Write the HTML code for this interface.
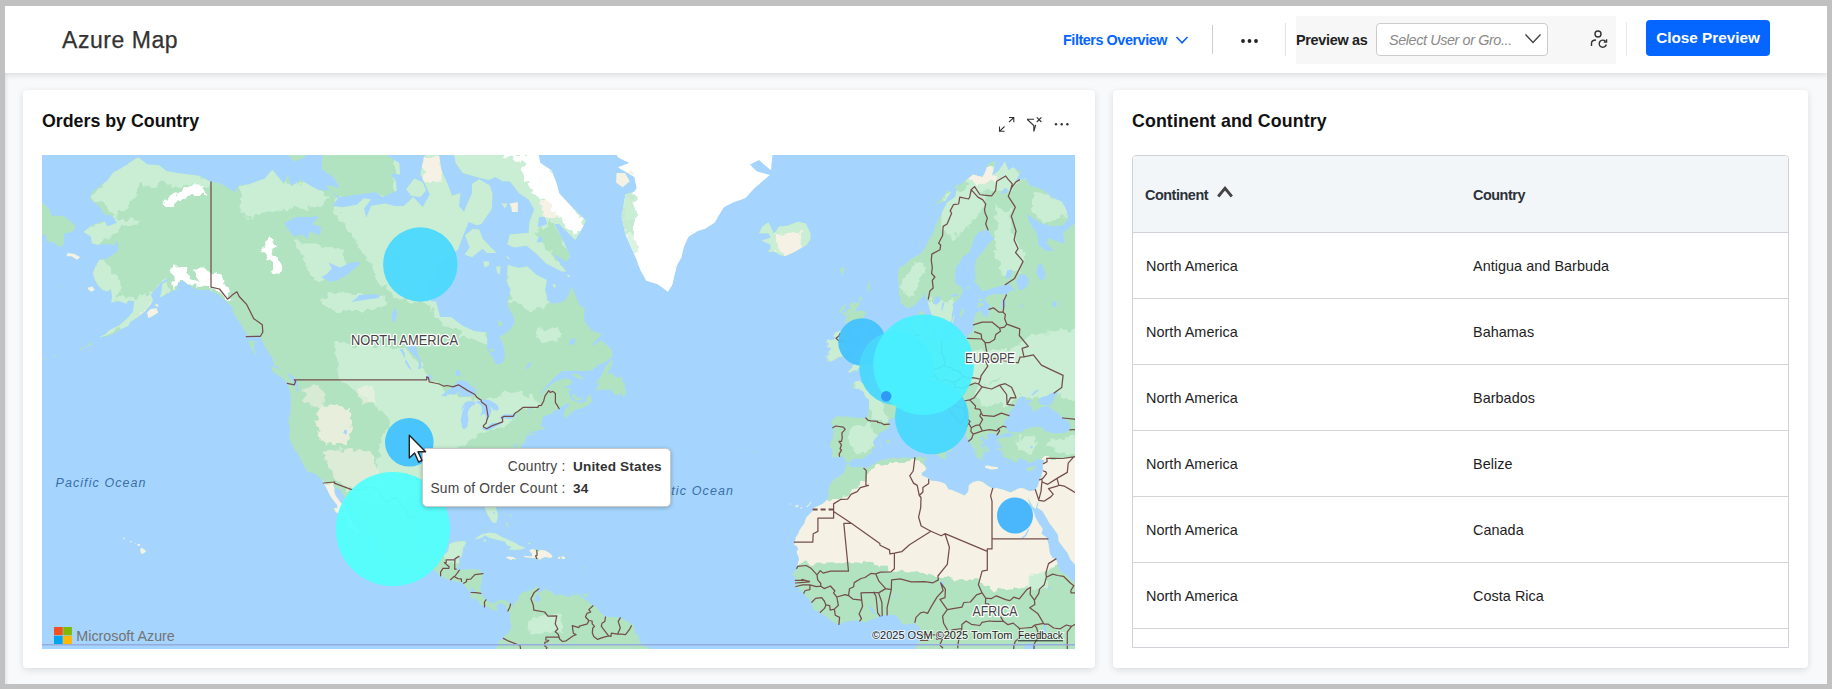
<!DOCTYPE html>
<html lang="en">
<head>
<meta charset="utf-8">
<title>Azure Map</title>
<style>
*{box-sizing:border-box;margin:0;padding:0}
html,body{width:1832px;height:689px;overflow:hidden;background:#c1c1c1;font-family:"Liberation Sans",sans-serif;color:#222}
#frame{position:absolute;left:5px;top:6px;width:1822px;height:678px;background:#f8f9fa;overflow:hidden}
#frame:before{content:"";position:absolute;left:0;top:67px;width:4px;height:611px;background:linear-gradient(90deg,rgba(60,70,90,.10),rgba(60,70,90,0))}
#hdr{position:absolute;left:0;top:0;width:1822px;height:67px;background:#fff;box-shadow:0 2px 6px rgba(0,0,0,.12)}
.abs{position:absolute;white-space:nowrap}
#title{left:57px;top:19px;font-size:23px;line-height:30px;color:#333;letter-spacing:.55px;-webkit-text-stroke:.25px #333}
#fo{left:1058px;top:25px;font-size:14.4px;line-height:18px;font-weight:bold;color:#0565ff;letter-spacing:-.45px}
.vsep{position:absolute;width:1px}
#pvbg{position:absolute;left:1291px;top:10px;width:320px;height:48px;background:#f7f7f7}
#pvas{left:1291px;top:25px;font-size:14.4px;line-height:18px;font-weight:bold;color:#222;letter-spacing:-.3px}
#sel{position:absolute;left:1371px;top:17px;width:172px;height:33px;border:1px solid #ccc;border-radius:4px;background:#fff}
#selt{left:1384px;top:25px;font-size:14.4px;line-height:18px;font-style:italic;color:#8a8a8a;letter-spacing:-.4px}
#btn{position:absolute;left:1641px;top:14px;width:124px;height:36px;border-radius:4px;background:#0565ff;color:#fff;font-weight:bold;font-size:15.3px;line-height:35px;text-align:center;white-space:nowrap}
.card{position:absolute;background:#fff;border-radius:4px;box-shadow:0 2px 7px rgba(0,0,0,.12)}
#c1{left:18px;top:84px;width:1072px;height:578px}
#c2{left:1108px;top:84px;width:695px;height:578px}
.ct{font-size:17.8px;line-height:24px;font-weight:bold;color:#111}
#map{position:absolute;left:37px;top:149px;width:1033px;height:494px;overflow:hidden;background:#a5d5fe}
#tbl{position:absolute;left:1127px;top:149px;width:657px;height:493px;border:1px solid #cfd3d7;border-radius:4px 4px 0 0;overflow:hidden;background:#fff}
#th{position:absolute;left:0;top:0;width:655px;height:77px;background:#f3f6f9;border-bottom:1px solid #cfd3d7}
.hc{position:absolute;top:29.5px;font-size:14.4px;line-height:18px;font-weight:bold;color:#2b3138;letter-spacing:-.45px}
.row{position:absolute;left:0;width:655px;height:66px;border-bottom:1px solid #d2d5d8}
.row span{position:absolute;top:23.5px;font-size:14.4px;line-height:18px;color:#1d1d1d;white-space:nowrap;letter-spacing:.05px}
.row .a{left:13px}.row .b{left:340px}
</style>
</head>
<body>
<div id="frame">
 <div id="hdr">
  <div class="abs" id="title">Azure Map</div>
  <div class="abs" id="fo">Filters Overview</div>
  <svg class="abs" style="left:1170px;top:29px" width="14" height="10" viewBox="0 0 14 10"><path d="M1.5 2 L7 7.8 L12.5 2" fill="none" stroke="#0565ff" stroke-width="1.6"/></svg>
  <div class="vsep" style="left:1207px;top:19px;height:29px;background:#cfcfcf"></div>
  <svg class="abs" style="left:1235px;top:32px" width="20" height="6" viewBox="0 0 20 6"><circle cx="3" cy="3" r="1.9" fill="#222"/><circle cx="9.5" cy="3" r="1.9" fill="#222"/><circle cx="16" cy="3" r="1.9" fill="#222"/></svg>
  <div class="vsep" style="left:1280px;top:17px;height:33px;background:#e4e4e4"></div>
  <div id="pvbg"></div>
  <div class="abs" id="pvas">Preview as</div>
  <div id="sel"></div>
  <div class="abs" id="selt">Select User or Gro...</div>
  <svg class="abs" style="left:1519px;top:27px" width="18" height="12" viewBox="0 0 18 12"><path d="M1.5 1.5 L9 9.5 L16.5 1.5" fill="none" stroke="#444" stroke-width="1.4"/></svg>
  <svg class="abs" id="uicon" style="left:1584px;top:23px" width="20" height="20" viewBox="0 0 20 20"><circle cx="9" cy="5" r="3" fill="none" stroke="#333" stroke-width="1.4"/><path d="M2.5 17 V14.5 Q2.5 11 7 11" fill="none" stroke="#333" stroke-width="1.4"/><path d="M16.5 12.3 A3.6 3.6 0 1 0 17.3 15.5" fill="none" stroke="#333" stroke-width="1.4"/><path d="M17.6 10.2 V13 H14.8" fill="none" stroke="#333" stroke-width="1.3"/></svg>
  <div class="vsep" style="left:1621px;top:16px;height:34px;background:#e8e8e8"></div>
  <div id="btn">Close Preview</div>
 </div>

 <div class="card" id="c1">
  <div class="abs ct" style="left:19px;top:18.5px">Orders by Country</div>
  <svg class="abs" style="left:973.5px;top:19.8px" width="80" height="24" viewBox="0 0 80 24">
   <g fill="none" stroke="#333" stroke-width="1.1">
    <path d="M7.5 16.5 L2.5 21.3 M2.5 16.5 V21.3 H7.5"/><path d="M12 12.2 L16.8 7.5 M12 7.5 H16.8 V12.2"/>
    <path d="M30 9.2 H37 M30.3 9.5 L36.8 15.5 V21.5 M38.6 15 L36.9 21.3"/>
    <path d="M39.8 7.3 L44.4 12 M44.4 7.3 L39.8 12"/>
   </g>
   <circle cx="59" cy="14.2" r="1.2" fill="#333"/><circle cx="64.7" cy="14.2" r="1.2" fill="#333"/><circle cx="70.4" cy="14.2" r="1.2" fill="#333"/>
  </svg>
 </div>
 <div id="map"><svg width="1033" height="494" viewBox="42 155 1033 494" style="position:absolute;left:0;top:0;display:block"><defs><clipPath id="lc"><path d="M92.4 191.9L89.6 199.0L100.4 207.2L104.2 214.5L112.2 215.7L116.9 222.8L107.5 226.4L104.2 221.1L92.9 224.6L83.5 232.1L91.0 236.6L92.0 243.3L98.1 244.9L107.5 243.8L115.0 245.5L116.0 240.5L117.8 243.3L117.8 250.9L112.2 255.1L106.1 259.3L100.0 259.3L95.7 265.5L92.9 273.5L95.3 280.4L98.1 285.2L102.8 289.9L107.5 291.4L110.8 289.0L112.2 296.5L111.2 302.4L118.8 301.0L126.3 303.8L128.2 300.6L134.3 301.0L132.9 311.8L128.2 317.4L119.2 325.5L108.9 330.5L105.6 334.2L99.0 337.1L107.5 336.3L114.5 333.0L121.6 328.9L128.7 325.5L130.1 322.1L138.1 317.0L145.1 310.9L148.9 306.4L153.1 300.6L150.8 294.6L156.4 288.1L160.7 282.8L167.2 278.4L169.6 277.5L167.7 280.9L162.5 283.8L161.1 293.2L159.7 297.4L166.3 294.6L171.5 290.9L177.1 289.9L178.1 282.3L183.2 280.4L188.9 285.2L194.5 288.1L196.9 289.9L208.6 289.9L217.1 293.7L225.6 301.0L231.7 306.4L236.4 309.1L235.9 317.0L240.6 323.8L244.9 331.3L250.5 335.9L257.1 333.0L261.3 338.7L264.6 345.9L269.3 353.7L272.6 358.3L274.0 365.1L280.2 368.8L286.7 372.5L294.7 377.6L297.6 382.6L299.0 391.1L296.2 391.8L297.1 386.2L287.7 384.0L290.5 394.5L291.0 399.0L290.7 410.0L288.4 421.4L290.0 428.7L289.1 436.9L292.4 445.7L296.2 451.4L298.0 453.8L300.9 459.7L303.7 465.0L307.0 471.6L311.2 472.4L316.9 474.7L318.3 476.4L322.5 480.3L323.4 483.1L325.8 486.8L329.6 494.7L333.3 500.2L337.1 505.0L337.6 507.7L333.3 508.5L335.7 511.9L339.9 514.6L346.0 518.2L347.0 525.5L351.2 528.1L355.9 532.7L357.3 534.3L359.7 532.2L355.4 527.1L353.6 524.0L350.5 518.2L346.0 511.4L343.7 505.5L340.4 502.3L335.7 495.8L334.3 491.4L334.5 487.3L340.4 489.8L344.6 496.9L347.7 503.4L352.6 508.2L358.7 514.6L360.1 520.3L366.7 526.6L373.8 532.7L378.0 538.8L379.0 541.9L378.0 544.9L377.1 546.9L380.4 551.4L383.7 553.7L387.9 557.4L393.5 559.1L399.2 562.3L404.4 564.5L411.0 567.2L417.5 569.4L422.7 570.2L426.5 568.0L432.1 568.7L436.8 572.1L440.1 575.8L446.2 578.9L453.3 580.9L459.4 582.3L462.2 582.3L464.1 585.2L468.4 590.0L471.2 592.7L470.7 597.2L474.0 599.6L475.4 597.7L476.4 599.6L478.5 600.6L480.6 604.9L482.5 605.1L484.4 607.0L487.6 606.0L490.0 608.7L493.8 610.8L498.0 609.8L496.1 606.3L499.9 602.7L504.6 604.4L506.0 606.3L506.5 609.6L507.9 611.0L510.2 614.3L509.8 619.1L510.7 623.8L511.6 626.6L508.8 632.8L503.6 636.5L502.7 639.4L498.9 640.5L497.5 645.0L496.1 649.2L496.1 654.4L665.0 654.4L658.0 650.2L648.6 648.3L641.5 644.1L639.1 640.8L639.1 636.5L634.9 633.2L634.0 625.2L631.6 624.7L628.3 621.7L620.8 618.1L614.7 617.0L605.3 616.7L600.8 612.9L596.8 607.2L592.1 604.9L588.3 601.5L583.6 598.7L578.9 595.8L582.7 594.4L578.0 594.4L572.3 595.3L568.6 597.2L563.6 594.8L559.6 594.8L554.5 595.3L552.6 592.0L547.4 590.5L546.0 589.6L545.0 587.2L543.6 590.0L539.4 592.9L536.1 590.5L538.9 588.8L537.3 586.0L531.4 590.3L525.3 591.5L522.2 592.7L519.2 595.8L518.2 600.1L513.3 604.1L512.6 607.2L510.5 604.1L505.1 600.3L500.4 599.6L498.5 600.8L493.3 603.4L490.0 602.5L487.6 601.0L483.9 597.7L481.1 593.4L480.4 588.1L481.5 583.3L482.0 578.5L483.2 573.6L479.2 569.7L474.5 569.0L469.8 569.0L466.0 569.7L460.6 569.4L457.5 570.2L456.1 569.0L458.9 565.8L459.4 561.3L458.9 556.4L461.3 557.4L462.7 551.4L462.9 547.9L466.0 542.9L464.6 540.9L458.0 541.4L452.6 542.4L449.1 544.4L448.6 549.7L446.2 553.4L442.5 555.7L438.2 555.9L430.2 558.1L426.5 555.4L422.2 552.9L419.9 548.9L416.6 543.9L414.3 537.6L414.5 528.6L417.3 518.5L416.6 511.9L418.0 507.7L422.7 504.5L428.4 500.7L432.8 498.5L440.1 499.3L444.8 500.7L449.5 501.8L453.8 502.3L452.8 497.5L455.2 495.3L460.4 495.3L464.1 495.0L471.2 496.4L472.8 498.8L478.2 496.6L482.0 499.6L485.1 505.0L485.1 508.7L487.6 514.6L489.5 517.7L492.8 522.7L496.1 522.7L497.3 519.3L497.8 514.6L495.4 505.3L493.3 500.7L491.4 495.0L493.3 485.9L498.5 481.7L502.7 477.5L507.6 475.6L514.2 471.3L519.2 467.6L517.3 459.7L515.4 457.4L515.4 451.4L514.5 444.2L516.8 443.0L516.3 449.6L517.1 456.5L520.6 451.4L521.1 446.6L519.2 443.0L521.8 445.7L524.3 443.3L526.2 436.5L526.7 434.4L531.4 431.6L536.3 431.3L538.5 430.0L541.8 429.4L545.3 428.7L544.1 426.5L542.2 427.5L540.3 424.6L542.2 422.7L541.5 420.1L544.1 416.3L549.8 414.0L553.5 412.0L559.2 408.0L563.6 405.7L570.0 402.4L569.0 405.4L564.8 410.0L563.4 415.3L565.8 417.9L571.9 412.0L575.2 410.0L582.7 407.4L587.4 405.4L592.3 401.3L590.2 393.8L587.4 396.6L585.0 402.7L579.4 402.7L574.2 400.7L570.9 399.0L568.6 393.1L570.5 388.3L566.2 388.3L562.5 386.9L567.2 386.2L572.3 383.3L571.9 380.5L566.2 378.0L556.8 380.8L552.1 383.7L547.2 387.9L542.2 393.1L539.4 395.2L542.7 391.1L546.5 385.8L553.8 378.3L562.0 371.1L575.2 370.7L583.6 371.1L592.1 370.3L598.2 365.1L605.7 362.1L612.3 356.8L611.9 349.8L606.2 344.3L600.6 340.3L592.1 345.1L596.8 339.5L602.0 334.6L591.2 330.1L584.1 320.8L584.6 308.2L579.9 305.6L571.4 286.2L568.6 294.6L563.9 301.5L553.0 303.8L546.9 300.1L546.9 296.5L545.0 289.9L546.9 279.9L536.1 274.5L527.2 266.5L518.7 268.0L507.9 265.0L506.5 282.3L510.7 289.5L506.9 304.2L513.5 317.0L514.5 323.0L508.6 331.3L499.4 336.7L502.7 343.5L505.1 355.6L503.2 361.4L499.4 364.4L495.6 363.6L491.9 356.0L487.2 350.2L487.2 332.6L474.5 331.3L462.2 325.5L450.9 317.0L440.1 317.0L435.9 301.5L431.2 301.5L428.8 289.9L431.7 279.4L441.1 262.4L447.7 256.7L458.0 249.8L462.7 236.6L468.8 221.7L476.8 225.2L481.5 224.0L491.9 208.4L492.4 193.2L489.5 185.3L479.2 179.2L472.1 183.9L472.1 193.2L467.4 203.4L464.1 212.1L458.9 205.9L460.4 193.2L451.9 195.8L448.6 186.6L441.5 170.2L439.2 155.7L432.1 148.2L423.7 157.2L420.4 174.4L425.1 183.9L429.8 194.5L422.7 207.2L413.3 197.1L403.9 205.9L394.5 205.9L385.1 203.4L371.0 205.9L366.3 218.1L363.9 208.4L371.0 199.6L363.9 198.3L356.9 204.7L342.7 207.2L332.9 205.9L338.0 198.3L328.6 190.6L319.2 190.6L300.4 179.9L291.0 185.9L287.7 174.4L283.9 183.9L272.2 169.5L265.1 178.5L248.6 184.6L239.2 185.3L234.5 191.9L220.4 183.3L211.0 181.9L198.8 175.8L176.6 173.0L166.3 170.9L159.2 165.2L147.5 164.5L138.1 157.2L121.6 168.0L112.7 173.0L107.5 180.6ZM608.6 140.5L618.0 157.2L629.7 163.0L618.0 167.3L634.4 177.1L636.8 187.9L634.0 191.9L625.5 194.5L621.7 216.3L625.5 234.4L631.2 247.6L636.8 260.3L640.6 270.5L646.2 280.4L658.0 284.2L667.9 291.8L672.1 285.2L674.4 275.5L676.8 265.5L681.5 257.2L683.8 246.6L688.6 236.6L697.5 231.0L705.0 228.7L714.4 222.8L723.8 207.2L733.2 202.2L745.0 198.3L754.4 187.9L769.9 175.1L756.8 171.6L749.7 164.5L759.1 160.1L770.9 170.2L772.3 155.7L768.5 140.5ZM616.1 182.6L622.7 187.3L629.7 181.2L625.0 173.0L616.6 173.0ZM768.5 233.2L770.9 237.7L761.5 240.5L770.4 244.4L770.9 248.2L767.6 251.9L774.7 251.4L778.9 254.6L785.0 256.2L794.4 251.9L802.9 247.1L806.2 245.5L810.6 238.9L810.4 233.2L805.7 223.4L798.2 221.7L787.4 225.8L778.9 226.4L775.6 232.1L773.7 233.2L768.5 222.3L762.4 226.4L759.1 233.2ZM1079.1 220.5L1069.7 227.5L1062.6 233.2L1065.0 243.8L1055.5 241.1L1048.5 237.7L1046.6 243.3L1053.7 250.9L1046.1 250.9L1038.1 244.4L1038.1 239.4L1036.7 233.2L1029.7 222.8L1026.8 213.9L1036.7 220.5L1043.8 224.0L1053.2 226.4L1062.6 225.2L1068.2 219.3L1066.4 209.6L1061.7 201.5L1053.2 198.3L1043.8 190.6L1034.4 186.6L1031.1 186.6L1025.0 178.5L1015.5 181.2L1020.7 172.0L1013.2 167.3L1008.5 170.2L1004.7 161.6L999.1 170.2L992.0 175.8L995.8 160.6L987.3 164.5L985.9 170.2L982.6 177.1L973.2 174.4L963.8 181.9L956.7 187.9L955.3 197.1L947.3 202.2L942.2 212.1L935.6 225.2L933.2 233.2L928.5 240.0L925.2 247.6L920.0 254.1L910.6 259.3L903.6 265.5L898.4 268.5L897.9 274.5L897.9 279.4L898.9 286.2L898.9 294.6L900.7 299.2L900.7 302.9L907.6 308.2L912.0 306.9L915.8 304.2L920.0 299.2L923.3 296.5L924.3 291.4L925.9 297.4L927.1 299.7L929.0 306.4L930.4 310.9L933.2 317.8L934.9 320.0L933.0 323.0L934.2 325.1L935.6 328.9L934.9 330.5L939.3 330.3L941.9 329.3L941.2 326.4L944.3 324.2L947.8 324.2L949.7 323.0L951.6 320.0L951.8 314.8L952.7 310.4L953.4 302.9L956.7 301.5L960.5 296.5L963.3 290.9L961.2 286.6L955.3 283.3L954.9 275.5L956.0 266.5L958.9 263.9L962.4 257.2L969.9 251.9L973.2 241.6L975.6 235.5L978.9 232.1L987.8 229.8L994.1 238.9L989.7 242.2L983.1 251.4L976.0 259.3L974.6 267.5L975.6 276.5L974.6 282.3L979.1 286.2L982.4 291.4L991.8 288.5L1001.2 285.7L1009.7 283.8L1015.5 290.4L1010.8 290.4L1006.1 294.6L996.7 293.7L990.8 295.1L985.0 297.4L985.0 301.0L989.7 305.1L989.0 309.1L987.8 316.6L983.6 316.6L980.7 310.4L975.8 313.5L973.2 321.3L973.7 328.0L970.9 333.8L968.0 334.2L967.6 338.3L962.4 339.1L961.0 335.9L957.0 335.9L952.0 337.5L947.6 340.3L941.4 342.7L937.9 337.9L933.2 338.7L931.3 340.7L925.7 342.3L925.7 339.1L922.2 339.1L920.0 335.5L920.0 329.7L922.4 324.2L925.7 322.1L922.9 319.1L923.3 315.3L924.3 310.4L921.2 311.8L914.9 315.9L913.0 319.6L912.5 325.5L914.2 329.7L915.1 334.6L916.3 338.7L914.9 339.5L916.3 342.7L914.6 345.5L912.0 344.3L908.3 345.9L906.9 346.3L903.6 346.7L899.8 347.9L897.9 350.2L899.3 353.7L897.5 350.2L895.8 354.1L893.7 357.7L890.9 361.4L889.5 362.5L885.5 364.7L883.1 365.5L881.8 366.1L881.9 371.1L879.5 373.0L875.3 374.7L874.9 376.5L873.0 377.6L869.2 376.9L868.5 374.7L865.2 374.5L866.9 378.3L867.3 382.4L865.0 382.3L861.7 383.0L859.8 380.8L855.6 381.8L851.9 384.0L854.2 385.8L852.1 386.6L853.8 388.3L858.6 388.8L861.5 390.4L864.0 392.0L864.5 394.9L865.9 397.3L869.0 399.7L869.2 403.6L868.8 409.7L867.6 416.3L865.9 418.0L860.3 418.0L856.5 417.4L853.2 417.9L846.9 416.3L841.5 416.9L837.5 415.5L834.9 418.1L830.8 421.1L833.0 425.6L832.7 427.7L833.6 432.2L832.7 438.4L830.3 443.2L829.7 446.7L832.1 448.7L832.7 451.7L832.1 457.2L837.1 457.4L839.6 456.3L841.7 456.2L844.5 458.5L846.0 462.2L848.1 463.2L849.2 462.5L853.6 459.0L857.9 459.0L862.9 458.4L864.0 459.0L865.5 456.2L869.8 453.8L871.1 453.6L872.1 449.3L875.5 447.0L872.8 442.7L874.4 439.3L878.5 434.9L880.3 432.5L884.7 430.8L889.0 427.8L890.0 424.8L888.7 422.4L889.0 419.8L891.8 417.9L896.0 418.2L899.6 418.5L902.3 419.8L905.7 419.2L908.6 415.9L911.0 415.2L914.3 412.0L916.4 411.4L920.7 413.3L922.9 416.9L923.9 420.9L926.6 424.3L929.9 426.2L931.9 428.4L935.8 431.7L938.3 431.9L941.4 434.2L943.9 435.2L945.0 437.5L947.9 438.9L949.8 443.3L950.6 446.0L948.9 447.7L948.0 451.4L950.0 451.9L952.3 449.0L952.5 446.6L955.0 444.9L955.1 443.0L952.0 440.9L952.7 438.7L955.5 436.4L959.1 439.0L960.8 440.5L961.4 438.4L958.9 435.4L953.8 432.3L949.7 430.3L949.3 429.2L950.5 427.6L946.4 427.5L941.3 423.9L939.8 420.5L938.0 416.5L933.5 413.5L932.2 411.0L933.4 407.7L932.5 404.5L936.0 402.7L939.2 403.0L937.9 404.0L939.6 408.2L942.3 405.2L944.5 407.4L946.1 413.2L951.8 417.2L956.3 420.1L959.6 422.7L964.3 426.2L965.9 431.1L965.7 436.4L968.5 440.1L969.8 442.4L972.0 445.7L973.7 449.3L977.9 449.3L974.6 450.5L973.9 451.7L976.4 455.9L976.5 458.4L978.4 457.2L980.2 460.9L980.6 458.8L983.6 460.7L981.9 455.6L985.0 454.7L982.6 451.9L985.6 451.8L987.5 453.5L987.6 450.5L984.0 448.4L980.7 446.3L982.4 443.3L984.3 444.2L982.1 439.9L980.7 438.7L982.4 435.4L984.0 437.8L986.1 439.6L989.2 438.4L986.1 435.0L989.2 433.6L992.5 433.4L996.1 434.1L997.0 434.9L1000.0 436.2L997.7 439.0L997.4 439.6L997.1 442.5L1001.2 441.9L1000.0 443.6L1001.0 446.0L1002.1 448.9L998.5 447.5L998.1 449.5L1000.5 450.8L1002.6 452.3L1002.6 455.3L1003.5 457.2L1007.6 457.2L1003.2 459.2L1007.4 458.2L1011.3 459.6L1013.8 462.1L1017.4 462.1L1018.8 458.1L1025.0 460.0L1028.9 463.1L1034.1 461.5L1037.3 458.5L1040.9 459.9L1044.6 459.7L1043.5 462.7L1042.7 466.0L1043.2 469.6L1041.4 475.3L1039.1 481.4L1038.0 485.5L1035.4 489.7L1033.4 490.7L1029.7 490.9L1026.4 490.0L1024.1 488.6L1020.3 488.1L1017.3 488.9L1015.1 490.3L1010.6 492.4L1002.5 489.5L996.4 488.0L992.7 488.4L987.2 485.5L983.1 482.3L978.7 480.8L973.0 482.0L968.8 485.3L968.3 491.4L964.7 495.4L961.7 494.2L952.5 490.3L948.4 489.2L945.4 483.9L941.5 482.3L936.4 480.9L931.2 480.7L926.7 477.5L921.9 475.4L921.7 473.0L925.1 470.5L926.9 467.7L924.4 464.2L924.3 460.9L926.6 458.2L926.4 456.9L922.9 458.2L920.8 455.7L915.6 457.7L911.0 458.0L906.9 458.1L905.0 456.9L898.3 458.8L892.7 457.8L888.8 458.7L880.5 460.2L874.8 463.6L871.4 465.0L868.8 467.3L864.0 468.5L860.4 466.5L855.9 467.6L852.3 467.8L849.5 465.7L849.5 463.8L846.5 464.5L845.5 467.8L843.3 473.2L838.6 477.0L834.4 478.9L830.7 482.9L828.4 488.7L827.9 493.5L829.2 494.6L826.6 500.3L822.4 503.9L813.6 508.0L811.4 512.2L806.2 517.5L804.3 523.4L799.4 530.2L798.2 533.7L795.8 537.3L794.2 544.9L796.8 545.9L798.2 548.9L796.5 552.0L799.1 558.4L796.8 568.6L791.9 575.0L794.6 576.4L795.6 579.2L795.6 585.5L798.2 588.1L803.8 592.9L806.4 596.7L809.9 600.1L812.1 605.0L813.7 609.4L819.9 612.2L823.6 615.2L827.1 617.3L831.8 621.4L838.1 624.4L843.2 622.6L845.8 621.7L855.6 620.3L859.8 621.0L864.5 622.6L868.5 621.0L873.5 618.8L877.5 617.8L880.1 616.1L885.8 615.1L890.4 614.7L895.6 615.3L897.9 617.7L899.6 619.8L902.2 624.3L903.8 624.7L908.0 624.2L913.5 623.3L917.7 626.2L919.3 626.9L921.0 631.2L920.4 636.2L919.6 640.1L918.6 642.9L915.3 648.0L918.2 654.4L1109.7 654.4L1109.7 588.1L1077.7 588.1L1075.5 583.3L1070.6 578.9L1067.1 575.1L1063.5 573.6L1060.0 570.7L1056.0 558.9L1052.7 557.9L1050.0 553.4L1049.5 550.9L1048.5 543.9L1046.8 537.7L1041.4 533.7L1042.8 529.1L1038.6 523.1L1035.7 517.7L1033.6 511.7L1030.1 505.8L1027.5 497.2L1030.1 502.0L1032.6 506.4L1035.6 509.1L1036.8 505.0L1038.9 499.5L1037.9 505.5L1037.1 507.7L1042.4 511.1L1045.9 517.0L1049.5 523.3L1053.4 528.2L1057.9 534.8L1058.7 541.4L1063.9 548.2L1067.7 553.3L1070.1 558.9L1074.6 564.3L1076.7 571.2L1109.7 573.6L1109.7 215.7ZM847.6 372.0L849.9 372.8L854.9 369.9L857.2 370.9L858.4 368.1L862.9 368.7L865.2 368.1L868.3 366.6L870.7 367.1L875.6 367.1L879.0 365.7L880.8 364.1L881.2 362.3L877.7 361.7L878.6 359.5L880.4 357.9L881.8 357.0L882.6 353.9L880.5 350.4L876.8 350.2L875.3 351.4L876.0 348.7L875.0 345.3L873.5 344.3L874.0 341.0L871.6 337.9L869.0 336.7L867.7 333.7L866.9 328.9L865.0 327.4L862.6 325.5L859.3 325.7L858.4 325.3L862.3 323.1L860.3 321.7L862.9 319.6L864.6 315.7L866.0 312.6L865.0 310.9L859.0 310.7L854.5 312.8L856.6 309.4L855.6 309.3L859.9 304.2L860.2 302.4L857.8 302.9L850.9 302.6L849.5 306.0L850.2 309.1L847.1 309.6L846.9 313.2L847.5 314.6L847.0 317.0L845.1 319.3L848.7 322.0L848.1 324.7L847.3 331.3L849.0 326.6L852.0 325.9L852.6 329.9L850.2 333.8L851.6 336.8L853.7 336.4L857.5 334.9L860.0 334.2L857.3 337.9L859.2 341.1L861.0 341.1L860.0 343.5L860.3 346.5L857.9 347.3L854.3 346.5L852.4 347.5L853.7 348.8L851.9 351.4L855.0 350.5L855.3 353.5L853.9 355.9L850.5 357.3L849.5 358.3L850.0 360.0L853.8 359.6L855.8 360.6L859.0 362.1L860.4 361.0L861.9 360.2L860.4 362.5L860.0 363.5L855.0 363.5L853.1 365.0L852.1 367.6L850.5 369.4L848.6 370.9ZM838.5 331.5L835.4 332.6L834.4 334.1L833.0 336.4L835.8 336.9L834.2 339.5L831.1 339.9L827.4 339.5L826.2 342.2L829.2 343.5L828.1 345.0L826.3 346.7L831.8 348.3L829.8 350.2L827.7 353.2L830.2 353.1L828.1 355.5L825.1 356.8L828.3 356.8L825.7 358.3L829.2 358.6L826.4 360.8L829.9 360.0L828.2 361.7L832.3 361.1L835.5 359.1L838.7 357.0L841.8 356.6L844.4 356.3L845.2 353.3L846.2 350.1L845.9 346.8L845.1 343.5L844.5 342.1L846.7 340.3L848.9 338.7L848.4 336.7L847.1 335.0L845.5 332.0L841.9 332.2L839.7 330.7ZM933.9 454.1L937.9 455.6L942.2 458.5L945.4 459.4L946.4 457.1L945.4 455.0L947.6 449.8L942.6 451.1L937.2 450.2L935.1 451.1L933.0 452.6ZM912.7 435.6L914.2 439.9L913.9 444.8L916.0 446.0L917.2 444.2L919.8 443.6L920.5 436.2L919.6 433.1L917.7 431.6L913.9 433.8L913.0 433.8ZM914.9 426.8L915.8 429.4L917.7 430.8L918.6 429.4L919.1 423.0L918.4 420.5L914.9 424.3ZM985.4 467.7L991.1 469.4L997.2 469.0L998.1 467.3L992.0 466.6L988.3 465.5L985.0 466.1ZM1026.8 470.4L1029.7 471.5L1034.4 469.0L1037.2 465.0L1033.0 467.0L1029.2 466.7L1026.4 468.7ZM887.1 442.4L889.0 443.6L890.6 440.9L889.0 439.6L885.5 441.8ZM881.9 446.3L881.9 444.8L880.0 446.0ZM892.5 439.7L894.2 440.2L894.6 439.3L892.3 439.0ZM985.4 448.1L988.3 450.8L990.1 451.4L988.3 447.8L985.0 445.4L982.4 446.0ZM1006.6 463.2L1007.1 460.6L1004.7 462.3ZM997.2 445.4L999.6 445.1L998.6 443.3L996.0 444.2ZM997.2 450.2L997.4 448.1L996.3 448.1ZM926.2 332.2L927.1 336.3L930.9 336.3L931.8 332.2L933.7 328.9L933.7 325.1L929.9 325.9L926.6 328.0ZM921.4 333.0L924.3 333.8L925.2 331.3L923.8 328.9L920.5 329.7ZM960.0 317.8L962.9 314.4L965.2 308.7L962.4 309.1L959.6 314.4ZM952.5 323.8L954.9 314.4L954.1 314.4L951.6 323.8ZM977.9 308.7L980.3 306.4L984.0 304.7L983.6 302.9L977.9 302.9L977.0 305.6ZM980.3 301.9L982.6 300.6L980.7 298.3L978.4 300.1ZM969.4 289.5L969.9 286.2L966.1 288.1ZM945.7 333.8L945.4 331.3L943.6 333.0ZM840.5 271.5L842.4 275.5L844.8 268.5L843.3 267.0L839.6 269.5ZM868.3 291.4L869.2 289.0L870.6 282.3L868.3 283.3L866.9 290.9ZM861.7 301.0L862.6 297.4L860.3 296.5L858.4 299.7ZM839.1 311.8L839.6 315.3L841.0 311.8L844.3 309.1L845.5 306.4L845.2 303.8L841.5 308.2ZM845.7 316.6L847.8 315.3L844.8 310.9L842.6 313.1ZM844.5 323.0L847.1 323.0L847.6 321.3L844.8 320.8ZM845.7 328.9L847.6 325.5L845.7 326.4L843.8 327.2ZM854.2 340.3L853.7 338.7L851.8 341.1ZM937.9 204.0L945.0 200.9L951.1 191.9L947.3 190.6L942.6 197.1L935.1 204.7ZM959.1 187.9L958.1 183.3L953.4 187.9ZM797.2 507.7L798.6 504.7L794.9 505.8ZM801.9 509.0L801.9 506.9L800.1 507.7ZM807.6 507.1L810.9 502.9L811.1 501.2L809.2 503.9L806.2 507.1ZM790.4 505.3L790.9 503.4L789.7 503.4ZM795.4 482.3L795.8 481.5L793.2 481.5ZM755.8 453.2L756.1 452.3L752.8 452.3ZM741.2 449.0L742.7 448.7L740.3 447.8ZM746.4 447.5L747.1 446.9L745.7 446.6ZM763.4 574.1L764.1 573.6L762.7 572.1ZM756.3 564.3L756.8 563.1L755.4 563.3ZM760.1 574.6L760.1 573.4L759.1 574.1ZM799.6 592.9L800.1 591.0L797.7 591.5ZM915.3 629.7L916.3 627.3L914.2 627.6ZM905.5 644.8L906.2 643.6L905.0 643.4ZM909.1 637.7L909.5 637.5L909.0 637.0ZM603.9 389.7L611.4 389.7L614.2 394.5L619.4 394.9L621.3 391.8L622.2 396.2L624.6 396.2L626.7 390.4L624.6 389.7L625.0 383.0L622.7 382.6L622.2 376.9L615.6 377.6L611.9 372.9L607.2 374.0L610.9 367.4L613.3 360.6L610.9 360.6L604.8 367.4L601.5 375.4L595.9 383.3L599.6 383.3L595.4 389.7ZM575.2 376.9L579.9 378.7L584.1 379.0L578.0 374.0L570.9 373.6ZM575.6 399.7L580.3 400.7L582.7 397.6L578.0 397.9L573.3 393.8L571.4 396.6ZM584.1 391.8L585.5 389.7L583.2 391.8ZM531.9 434.7L536.1 432.8L534.2 432.5L528.6 433.8L526.2 435.6ZM273.1 371.8L281.6 377.6L287.7 383.0L293.8 384.4L293.3 381.9L284.9 371.1L276.9 368.1L270.3 366.6ZM250.0 345.9L253.3 351.4L258.0 357.6L253.8 348.3L254.8 341.1L248.2 340.7ZM148.4 318.3L152.7 316.1L158.3 312.6L156.4 308.2L150.8 309.1L147.0 312.6ZM158.3 306.9L158.3 303.8L154.5 305.1ZM91.0 291.8L94.8 289.9L92.4 286.6L86.8 288.1ZM71.7 256.2L76.9 259.8L80.2 257.2L74.5 254.1L67.5 253.0L66.6 256.2ZM62.3 287.1L63.7 286.6L60.9 285.2ZM87.3 347.1L92.0 344.3L91.0 341.9L84.9 347.5ZM80.7 350.6L84.4 347.5L84.0 345.9L79.3 350.6ZM55.3 356.8L55.7 354.9L51.5 356.8ZM44.4 359.8L44.0 357.9L41.6 359.8ZM73.6 316.1L74.1 314.8L72.7 315.3ZM237.3 318.7L241.1 323.0L239.2 309.1L233.1 309.1ZM247.7 332.2L253.3 335.5L251.0 325.5L245.3 323.0ZM25.1 229.8L28.4 225.2L34.6 225.2L29.9 233.2L36.9 233.2L46.3 235.5L46.8 241.6L53.4 242.2L59.5 247.1L63.7 244.4L64.2 233.2L72.2 232.1L76.0 226.4L69.8 220.5L62.8 215.7L52.0 215.7L48.7 208.4L39.3 199.6L32.2 194.5L25.1 191.9ZM25.1 265.5L30.8 260.3L34.6 255.1L39.7 243.3L34.6 244.4L32.2 241.1L25.1 238.9ZM25.1 164.5L29.9 164.5L39.3 160.1L34.6 155.0L25.1 155.7ZM477.8 538.8L482.0 537.8L484.8 535.3L489.5 537.8L498.0 540.1L505.1 541.4L506.9 545.2L511.6 546.9L508.8 549.7L521.5 549.4L525.5 547.7L519.2 545.4L514.5 542.6L508.8 539.9L501.3 536.8L495.2 533.2L488.6 532.7L483.9 533.7L479.2 535.8L474.7 539.6ZM483.9 541.6L485.8 541.4L485.8 539.3L483.4 540.1ZM531.9 558.1L536.6 558.1L538.5 560.9L542.2 557.9L545.0 556.9L550.9 557.9L552.8 555.9L548.8 552.4L545.0 550.4L537.1 549.4L531.9 549.2L529.1 550.4L531.9 553.4L531.9 556.6L524.3 555.7L523.9 557.1ZM506.5 558.1L511.2 560.1L515.4 559.6L515.9 558.4L512.6 556.9L508.4 556.4L505.8 557.4ZM558.2 559.1L564.3 559.1L565.8 557.6L563.9 556.4L558.0 556.9ZM583.2 597.5L587.4 597.0L587.9 593.6L583.2 594.4ZM507.4 527.6L509.3 527.1L508.4 522.9L506.0 522.9ZM510.7 516.1L512.1 518.2L511.6 515.1L508.4 513.5ZM505.5 515.3L507.4 514.3L502.7 514.6ZM530.5 544.1L530.5 542.4L527.6 543.4ZM515.2 522.9L516.1 525.0L515.9 521.9L513.1 520.8ZM585.0 569.0L586.5 566.5L583.6 567.2ZM587.9 576.5L588.1 575.1L586.5 574.3ZM585.7 572.6L586.2 571.2L585.0 570.7ZM587.2 579.9L588.0 578.7L587.0 578.0ZM594.2 583.1L594.8 582.6L593.7 581.8ZM574.2 593.4L574.2 592.2L571.4 592.7ZM550.2 587.9L550.9 587.9L549.0 586.4ZM570.0 484.5L570.2 483.7L569.0 484.3ZM465.3 547.7L466.2 546.2L464.8 546.2ZM451.9 140.5L455.7 163.0L462.7 173.0L476.8 177.1L488.6 179.9L495.6 177.1L502.7 181.2L509.8 181.2L519.2 193.2L528.6 199.6L534.2 209.6L529.5 221.7L528.6 233.2L523.9 233.2L509.8 234.4L507.4 244.4L514.5 247.6L526.2 245.5L535.6 253.0L545.5 262.9L561.5 271.5L566.2 271.5L561.5 265.5L552.1 252.5L566.2 261.4L570.0 256.2L563.9 242.2L554.5 224.0L559.2 224.0L566.2 231.0L575.2 240.0L580.3 232.1L586.0 220.5L570.9 205.9L559.2 193.2L556.8 183.9L551.6 170.2L540.3 163.0L535.6 140.5ZM466.9 240.0L469.8 247.6L464.6 254.6L472.1 257.2L482.5 248.7L487.2 253.0L496.6 253.0L490.9 247.6L482.9 238.9L479.2 229.8L473.1 228.7L465.1 235.5ZM484.8 267.5L489.1 265.0L489.1 261.4L483.4 261.4ZM497.1 272.5L499.9 274.5L500.4 266.5L496.1 266.5ZM508.4 259.3L509.8 258.3L505.5 255.1ZM554.9 288.5L555.9 284.7L552.1 284.2ZM568.6 277.5L570.5 275.5L566.7 274.5ZM498.9 326.4L502.7 325.5L501.8 321.3L498.0 320.4ZM489.5 351.4L493.8 351.8L494.2 349.1L488.6 349.1ZM512.1 212.1L517.8 212.1L517.8 202.2L509.8 203.4ZM505.1 208.4L507.4 203.4L501.3 203.4ZM411.0 195.8L420.4 197.1L426.0 190.6L422.7 182.6L414.3 178.5L406.3 189.3ZM323.9 140.5L321.6 168.8L333.3 177.1L340.4 187.9L326.3 185.3L331.0 191.9L340.4 197.1L356.9 194.5L375.7 191.9L382.7 197.1L396.8 190.6L395.9 181.2L389.8 173.0L400.1 174.4L399.2 163.0L387.4 155.7L380.4 140.5ZM283.9 140.5L282.5 149.7L294.7 161.6L305.1 157.2L309.8 140.5ZM396.8 140.5L403.9 151.2L413.3 154.2L420.4 140.5ZM425.1 140.5L429.8 146.7L436.8 140.5ZM140.7 552.4L142.1 554.3L146.1 551.4L144.2 549.2L141.1 547.6L140.2 550.2ZM138.1 545.9L140.4 545.4L139.5 544.1L137.1 544.1ZM130.5 542.5L132.4 541.6L129.8 541.1ZM124.2 539.4L124.9 537.8L122.8 538.1ZM135.7 543.5L136.9 543.0L134.3 542.9ZM233.1 312.6L236.9 318.7L243.9 327.2L247.7 336.3L255.7 336.3L260.4 333.8L255.7 325.5L243.9 304.7L232.2 305.6Z"/></clipPath><filter id="rg" x="42" y="155" width="1033" height="494" filterUnits="userSpaceOnUse" primitiveUnits="userSpaceOnUse"><feTurbulence type="fractalNoise" baseFrequency="0.12" numOctaves="2" seed="7" result="n"/><feDisplacementMap in="SourceGraphic" in2="n" scale="12" xChannelSelector="R" yChannelSelector="G"/></filter></defs><rect x="42" y="155" width="1033" height="494" fill="#a5d5fe"/><path d="M92.4 191.9L89.6 199.0L100.4 207.2L104.2 214.5L112.2 215.7L116.9 222.8L107.5 226.4L104.2 221.1L92.9 224.6L83.5 232.1L91.0 236.6L92.0 243.3L98.1 244.9L107.5 243.8L115.0 245.5L116.0 240.5L117.8 243.3L117.8 250.9L112.2 255.1L106.1 259.3L100.0 259.3L95.7 265.5L92.9 273.5L95.3 280.4L98.1 285.2L102.8 289.9L107.5 291.4L110.8 289.0L112.2 296.5L111.2 302.4L118.8 301.0L126.3 303.8L128.2 300.6L134.3 301.0L132.9 311.8L128.2 317.4L119.2 325.5L108.9 330.5L105.6 334.2L99.0 337.1L107.5 336.3L114.5 333.0L121.6 328.9L128.7 325.5L130.1 322.1L138.1 317.0L145.1 310.9L148.9 306.4L153.1 300.6L150.8 294.6L156.4 288.1L160.7 282.8L167.2 278.4L169.6 277.5L167.7 280.9L162.5 283.8L161.1 293.2L159.7 297.4L166.3 294.6L171.5 290.9L177.1 289.9L178.1 282.3L183.2 280.4L188.9 285.2L194.5 288.1L196.9 289.9L208.6 289.9L217.1 293.7L225.6 301.0L231.7 306.4L236.4 309.1L235.9 317.0L240.6 323.8L244.9 331.3L250.5 335.9L257.1 333.0L261.3 338.7L264.6 345.9L269.3 353.7L272.6 358.3L274.0 365.1L280.2 368.8L286.7 372.5L294.7 377.6L297.6 382.6L299.0 391.1L296.2 391.8L297.1 386.2L287.7 384.0L290.5 394.5L291.0 399.0L290.7 410.0L288.4 421.4L290.0 428.7L289.1 436.9L292.4 445.7L296.2 451.4L298.0 453.8L300.9 459.7L303.7 465.0L307.0 471.6L311.2 472.4L316.9 474.7L318.3 476.4L322.5 480.3L323.4 483.1L325.8 486.8L329.6 494.7L333.3 500.2L337.1 505.0L337.6 507.7L333.3 508.5L335.7 511.9L339.9 514.6L346.0 518.2L347.0 525.5L351.2 528.1L355.9 532.7L357.3 534.3L359.7 532.2L355.4 527.1L353.6 524.0L350.5 518.2L346.0 511.4L343.7 505.5L340.4 502.3L335.7 495.8L334.3 491.4L334.5 487.3L340.4 489.8L344.6 496.9L347.7 503.4L352.6 508.2L358.7 514.6L360.1 520.3L366.7 526.6L373.8 532.7L378.0 538.8L379.0 541.9L378.0 544.9L377.1 546.9L380.4 551.4L383.7 553.7L387.9 557.4L393.5 559.1L399.2 562.3L404.4 564.5L411.0 567.2L417.5 569.4L422.7 570.2L426.5 568.0L432.1 568.7L436.8 572.1L440.1 575.8L446.2 578.9L453.3 580.9L459.4 582.3L462.2 582.3L464.1 585.2L468.4 590.0L471.2 592.7L470.7 597.2L474.0 599.6L475.4 597.7L476.4 599.6L478.5 600.6L480.6 604.9L482.5 605.1L484.4 607.0L487.6 606.0L490.0 608.7L493.8 610.8L498.0 609.8L496.1 606.3L499.9 602.7L504.6 604.4L506.0 606.3L506.5 609.6L507.9 611.0L510.2 614.3L509.8 619.1L510.7 623.8L511.6 626.6L508.8 632.8L503.6 636.5L502.7 639.4L498.9 640.5L497.5 645.0L496.1 649.2L496.1 654.4L665.0 654.4L658.0 650.2L648.6 648.3L641.5 644.1L639.1 640.8L639.1 636.5L634.9 633.2L634.0 625.2L631.6 624.7L628.3 621.7L620.8 618.1L614.7 617.0L605.3 616.7L600.8 612.9L596.8 607.2L592.1 604.9L588.3 601.5L583.6 598.7L578.9 595.8L582.7 594.4L578.0 594.4L572.3 595.3L568.6 597.2L563.6 594.8L559.6 594.8L554.5 595.3L552.6 592.0L547.4 590.5L546.0 589.6L545.0 587.2L543.6 590.0L539.4 592.9L536.1 590.5L538.9 588.8L537.3 586.0L531.4 590.3L525.3 591.5L522.2 592.7L519.2 595.8L518.2 600.1L513.3 604.1L512.6 607.2L510.5 604.1L505.1 600.3L500.4 599.6L498.5 600.8L493.3 603.4L490.0 602.5L487.6 601.0L483.9 597.7L481.1 593.4L480.4 588.1L481.5 583.3L482.0 578.5L483.2 573.6L479.2 569.7L474.5 569.0L469.8 569.0L466.0 569.7L460.6 569.4L457.5 570.2L456.1 569.0L458.9 565.8L459.4 561.3L458.9 556.4L461.3 557.4L462.7 551.4L462.9 547.9L466.0 542.9L464.6 540.9L458.0 541.4L452.6 542.4L449.1 544.4L448.6 549.7L446.2 553.4L442.5 555.7L438.2 555.9L430.2 558.1L426.5 555.4L422.2 552.9L419.9 548.9L416.6 543.9L414.3 537.6L414.5 528.6L417.3 518.5L416.6 511.9L418.0 507.7L422.7 504.5L428.4 500.7L432.8 498.5L440.1 499.3L444.8 500.7L449.5 501.8L453.8 502.3L452.8 497.5L455.2 495.3L460.4 495.3L464.1 495.0L471.2 496.4L472.8 498.8L478.2 496.6L482.0 499.6L485.1 505.0L485.1 508.7L487.6 514.6L489.5 517.7L492.8 522.7L496.1 522.7L497.3 519.3L497.8 514.6L495.4 505.3L493.3 500.7L491.4 495.0L493.3 485.9L498.5 481.7L502.7 477.5L507.6 475.6L514.2 471.3L519.2 467.6L517.3 459.7L515.4 457.4L515.4 451.4L514.5 444.2L516.8 443.0L516.3 449.6L517.1 456.5L520.6 451.4L521.1 446.6L519.2 443.0L521.8 445.7L524.3 443.3L526.2 436.5L526.7 434.4L531.4 431.6L536.3 431.3L538.5 430.0L541.8 429.4L545.3 428.7L544.1 426.5L542.2 427.5L540.3 424.6L542.2 422.7L541.5 420.1L544.1 416.3L549.8 414.0L553.5 412.0L559.2 408.0L563.6 405.7L570.0 402.4L569.0 405.4L564.8 410.0L563.4 415.3L565.8 417.9L571.9 412.0L575.2 410.0L582.7 407.4L587.4 405.4L592.3 401.3L590.2 393.8L587.4 396.6L585.0 402.7L579.4 402.7L574.2 400.7L570.9 399.0L568.6 393.1L570.5 388.3L566.2 388.3L562.5 386.9L567.2 386.2L572.3 383.3L571.9 380.5L566.2 378.0L556.8 380.8L552.1 383.7L547.2 387.9L542.2 393.1L539.4 395.2L542.7 391.1L546.5 385.8L553.8 378.3L562.0 371.1L575.2 370.7L583.6 371.1L592.1 370.3L598.2 365.1L605.7 362.1L612.3 356.8L611.9 349.8L606.2 344.3L600.6 340.3L592.1 345.1L596.8 339.5L602.0 334.6L591.2 330.1L584.1 320.8L584.6 308.2L579.9 305.6L571.4 286.2L568.6 294.6L563.9 301.5L553.0 303.8L546.9 300.1L546.9 296.5L545.0 289.9L546.9 279.9L536.1 274.5L527.2 266.5L518.7 268.0L507.9 265.0L506.5 282.3L510.7 289.5L506.9 304.2L513.5 317.0L514.5 323.0L508.6 331.3L499.4 336.7L502.7 343.5L505.1 355.6L503.2 361.4L499.4 364.4L495.6 363.6L491.9 356.0L487.2 350.2L487.2 332.6L474.5 331.3L462.2 325.5L450.9 317.0L440.1 317.0L435.9 301.5L431.2 301.5L428.8 289.9L431.7 279.4L441.1 262.4L447.7 256.7L458.0 249.8L462.7 236.6L468.8 221.7L476.8 225.2L481.5 224.0L491.9 208.4L492.4 193.2L489.5 185.3L479.2 179.2L472.1 183.9L472.1 193.2L467.4 203.4L464.1 212.1L458.9 205.9L460.4 193.2L451.9 195.8L448.6 186.6L441.5 170.2L439.2 155.7L432.1 148.2L423.7 157.2L420.4 174.4L425.1 183.9L429.8 194.5L422.7 207.2L413.3 197.1L403.9 205.9L394.5 205.9L385.1 203.4L371.0 205.9L366.3 218.1L363.9 208.4L371.0 199.6L363.9 198.3L356.9 204.7L342.7 207.2L332.9 205.9L338.0 198.3L328.6 190.6L319.2 190.6L300.4 179.9L291.0 185.9L287.7 174.4L283.9 183.9L272.2 169.5L265.1 178.5L248.6 184.6L239.2 185.3L234.5 191.9L220.4 183.3L211.0 181.9L198.8 175.8L176.6 173.0L166.3 170.9L159.2 165.2L147.5 164.5L138.1 157.2L121.6 168.0L112.7 173.0L107.5 180.6ZM608.6 140.5L618.0 157.2L629.7 163.0L618.0 167.3L634.4 177.1L636.8 187.9L634.0 191.9L625.5 194.5L621.7 216.3L625.5 234.4L631.2 247.6L636.8 260.3L640.6 270.5L646.2 280.4L658.0 284.2L667.9 291.8L672.1 285.2L674.4 275.5L676.8 265.5L681.5 257.2L683.8 246.6L688.6 236.6L697.5 231.0L705.0 228.7L714.4 222.8L723.8 207.2L733.2 202.2L745.0 198.3L754.4 187.9L769.9 175.1L756.8 171.6L749.7 164.5L759.1 160.1L770.9 170.2L772.3 155.7L768.5 140.5ZM616.1 182.6L622.7 187.3L629.7 181.2L625.0 173.0L616.6 173.0ZM768.5 233.2L770.9 237.7L761.5 240.5L770.4 244.4L770.9 248.2L767.6 251.9L774.7 251.4L778.9 254.6L785.0 256.2L794.4 251.9L802.9 247.1L806.2 245.5L810.6 238.9L810.4 233.2L805.7 223.4L798.2 221.7L787.4 225.8L778.9 226.4L775.6 232.1L773.7 233.2L768.5 222.3L762.4 226.4L759.1 233.2ZM1079.1 220.5L1069.7 227.5L1062.6 233.2L1065.0 243.8L1055.5 241.1L1048.5 237.7L1046.6 243.3L1053.7 250.9L1046.1 250.9L1038.1 244.4L1038.1 239.4L1036.7 233.2L1029.7 222.8L1026.8 213.9L1036.7 220.5L1043.8 224.0L1053.2 226.4L1062.6 225.2L1068.2 219.3L1066.4 209.6L1061.7 201.5L1053.2 198.3L1043.8 190.6L1034.4 186.6L1031.1 186.6L1025.0 178.5L1015.5 181.2L1020.7 172.0L1013.2 167.3L1008.5 170.2L1004.7 161.6L999.1 170.2L992.0 175.8L995.8 160.6L987.3 164.5L985.9 170.2L982.6 177.1L973.2 174.4L963.8 181.9L956.7 187.9L955.3 197.1L947.3 202.2L942.2 212.1L935.6 225.2L933.2 233.2L928.5 240.0L925.2 247.6L920.0 254.1L910.6 259.3L903.6 265.5L898.4 268.5L897.9 274.5L897.9 279.4L898.9 286.2L898.9 294.6L900.7 299.2L900.7 302.9L907.6 308.2L912.0 306.9L915.8 304.2L920.0 299.2L923.3 296.5L924.3 291.4L925.9 297.4L927.1 299.7L929.0 306.4L930.4 310.9L933.2 317.8L934.9 320.0L933.0 323.0L934.2 325.1L935.6 328.9L934.9 330.5L939.3 330.3L941.9 329.3L941.2 326.4L944.3 324.2L947.8 324.2L949.7 323.0L951.6 320.0L951.8 314.8L952.7 310.4L953.4 302.9L956.7 301.5L960.5 296.5L963.3 290.9L961.2 286.6L955.3 283.3L954.9 275.5L956.0 266.5L958.9 263.9L962.4 257.2L969.9 251.9L973.2 241.6L975.6 235.5L978.9 232.1L987.8 229.8L994.1 238.9L989.7 242.2L983.1 251.4L976.0 259.3L974.6 267.5L975.6 276.5L974.6 282.3L979.1 286.2L982.4 291.4L991.8 288.5L1001.2 285.7L1009.7 283.8L1015.5 290.4L1010.8 290.4L1006.1 294.6L996.7 293.7L990.8 295.1L985.0 297.4L985.0 301.0L989.7 305.1L989.0 309.1L987.8 316.6L983.6 316.6L980.7 310.4L975.8 313.5L973.2 321.3L973.7 328.0L970.9 333.8L968.0 334.2L967.6 338.3L962.4 339.1L961.0 335.9L957.0 335.9L952.0 337.5L947.6 340.3L941.4 342.7L937.9 337.9L933.2 338.7L931.3 340.7L925.7 342.3L925.7 339.1L922.2 339.1L920.0 335.5L920.0 329.7L922.4 324.2L925.7 322.1L922.9 319.1L923.3 315.3L924.3 310.4L921.2 311.8L914.9 315.9L913.0 319.6L912.5 325.5L914.2 329.7L915.1 334.6L916.3 338.7L914.9 339.5L916.3 342.7L914.6 345.5L912.0 344.3L908.3 345.9L906.9 346.3L903.6 346.7L899.8 347.9L897.9 350.2L899.3 353.7L897.5 350.2L895.8 354.1L893.7 357.7L890.9 361.4L889.5 362.5L885.5 364.7L883.1 365.5L881.8 366.1L881.9 371.1L879.5 373.0L875.3 374.7L874.9 376.5L873.0 377.6L869.2 376.9L868.5 374.7L865.2 374.5L866.9 378.3L867.3 382.4L865.0 382.3L861.7 383.0L859.8 380.8L855.6 381.8L851.9 384.0L854.2 385.8L852.1 386.6L853.8 388.3L858.6 388.8L861.5 390.4L864.0 392.0L864.5 394.9L865.9 397.3L869.0 399.7L869.2 403.6L868.8 409.7L867.6 416.3L865.9 418.0L860.3 418.0L856.5 417.4L853.2 417.9L846.9 416.3L841.5 416.9L837.5 415.5L834.9 418.1L830.8 421.1L833.0 425.6L832.7 427.7L833.6 432.2L832.7 438.4L830.3 443.2L829.7 446.7L832.1 448.7L832.7 451.7L832.1 457.2L837.1 457.4L839.6 456.3L841.7 456.2L844.5 458.5L846.0 462.2L848.1 463.2L849.2 462.5L853.6 459.0L857.9 459.0L862.9 458.4L864.0 459.0L865.5 456.2L869.8 453.8L871.1 453.6L872.1 449.3L875.5 447.0L872.8 442.7L874.4 439.3L878.5 434.9L880.3 432.5L884.7 430.8L889.0 427.8L890.0 424.8L888.7 422.4L889.0 419.8L891.8 417.9L896.0 418.2L899.6 418.5L902.3 419.8L905.7 419.2L908.6 415.9L911.0 415.2L914.3 412.0L916.4 411.4L920.7 413.3L922.9 416.9L923.9 420.9L926.6 424.3L929.9 426.2L931.9 428.4L935.8 431.7L938.3 431.9L941.4 434.2L943.9 435.2L945.0 437.5L947.9 438.9L949.8 443.3L950.6 446.0L948.9 447.7L948.0 451.4L950.0 451.9L952.3 449.0L952.5 446.6L955.0 444.9L955.1 443.0L952.0 440.9L952.7 438.7L955.5 436.4L959.1 439.0L960.8 440.5L961.4 438.4L958.9 435.4L953.8 432.3L949.7 430.3L949.3 429.2L950.5 427.6L946.4 427.5L941.3 423.9L939.8 420.5L938.0 416.5L933.5 413.5L932.2 411.0L933.4 407.7L932.5 404.5L936.0 402.7L939.2 403.0L937.9 404.0L939.6 408.2L942.3 405.2L944.5 407.4L946.1 413.2L951.8 417.2L956.3 420.1L959.6 422.7L964.3 426.2L965.9 431.1L965.7 436.4L968.5 440.1L969.8 442.4L972.0 445.7L973.7 449.3L977.9 449.3L974.6 450.5L973.9 451.7L976.4 455.9L976.5 458.4L978.4 457.2L980.2 460.9L980.6 458.8L983.6 460.7L981.9 455.6L985.0 454.7L982.6 451.9L985.6 451.8L987.5 453.5L987.6 450.5L984.0 448.4L980.7 446.3L982.4 443.3L984.3 444.2L982.1 439.9L980.7 438.7L982.4 435.4L984.0 437.8L986.1 439.6L989.2 438.4L986.1 435.0L989.2 433.6L992.5 433.4L996.1 434.1L997.0 434.9L1000.0 436.2L997.7 439.0L997.4 439.6L997.1 442.5L1001.2 441.9L1000.0 443.6L1001.0 446.0L1002.1 448.9L998.5 447.5L998.1 449.5L1000.5 450.8L1002.6 452.3L1002.6 455.3L1003.5 457.2L1007.6 457.2L1003.2 459.2L1007.4 458.2L1011.3 459.6L1013.8 462.1L1017.4 462.1L1018.8 458.1L1025.0 460.0L1028.9 463.1L1034.1 461.5L1037.3 458.5L1040.9 459.9L1044.6 459.7L1043.5 462.7L1042.7 466.0L1043.2 469.6L1041.4 475.3L1039.1 481.4L1038.0 485.5L1035.4 489.7L1033.4 490.7L1029.7 490.9L1026.4 490.0L1024.1 488.6L1020.3 488.1L1017.3 488.9L1015.1 490.3L1010.6 492.4L1002.5 489.5L996.4 488.0L992.7 488.4L987.2 485.5L983.1 482.3L978.7 480.8L973.0 482.0L968.8 485.3L968.3 491.4L964.7 495.4L961.7 494.2L952.5 490.3L948.4 489.2L945.4 483.9L941.5 482.3L936.4 480.9L931.2 480.7L926.7 477.5L921.9 475.4L921.7 473.0L925.1 470.5L926.9 467.7L924.4 464.2L924.3 460.9L926.6 458.2L926.4 456.9L922.9 458.2L920.8 455.7L915.6 457.7L911.0 458.0L906.9 458.1L905.0 456.9L898.3 458.8L892.7 457.8L888.8 458.7L880.5 460.2L874.8 463.6L871.4 465.0L868.8 467.3L864.0 468.5L860.4 466.5L855.9 467.6L852.3 467.8L849.5 465.7L849.5 463.8L846.5 464.5L845.5 467.8L843.3 473.2L838.6 477.0L834.4 478.9L830.7 482.9L828.4 488.7L827.9 493.5L829.2 494.6L826.6 500.3L822.4 503.9L813.6 508.0L811.4 512.2L806.2 517.5L804.3 523.4L799.4 530.2L798.2 533.7L795.8 537.3L794.2 544.9L796.8 545.9L798.2 548.9L796.5 552.0L799.1 558.4L796.8 568.6L791.9 575.0L794.6 576.4L795.6 579.2L795.6 585.5L798.2 588.1L803.8 592.9L806.4 596.7L809.9 600.1L812.1 605.0L813.7 609.4L819.9 612.2L823.6 615.2L827.1 617.3L831.8 621.4L838.1 624.4L843.2 622.6L845.8 621.7L855.6 620.3L859.8 621.0L864.5 622.6L868.5 621.0L873.5 618.8L877.5 617.8L880.1 616.1L885.8 615.1L890.4 614.7L895.6 615.3L897.9 617.7L899.6 619.8L902.2 624.3L903.8 624.7L908.0 624.2L913.5 623.3L917.7 626.2L919.3 626.9L921.0 631.2L920.4 636.2L919.6 640.1L918.6 642.9L915.3 648.0L918.2 654.4L1109.7 654.4L1109.7 588.1L1077.7 588.1L1075.5 583.3L1070.6 578.9L1067.1 575.1L1063.5 573.6L1060.0 570.7L1056.0 558.9L1052.7 557.9L1050.0 553.4L1049.5 550.9L1048.5 543.9L1046.8 537.7L1041.4 533.7L1042.8 529.1L1038.6 523.1L1035.7 517.7L1033.6 511.7L1030.1 505.8L1027.5 497.2L1030.1 502.0L1032.6 506.4L1035.6 509.1L1036.8 505.0L1038.9 499.5L1037.9 505.5L1037.1 507.7L1042.4 511.1L1045.9 517.0L1049.5 523.3L1053.4 528.2L1057.9 534.8L1058.7 541.4L1063.9 548.2L1067.7 553.3L1070.1 558.9L1074.6 564.3L1076.7 571.2L1109.7 573.6L1109.7 215.7ZM847.6 372.0L849.9 372.8L854.9 369.9L857.2 370.9L858.4 368.1L862.9 368.7L865.2 368.1L868.3 366.6L870.7 367.1L875.6 367.1L879.0 365.7L880.8 364.1L881.2 362.3L877.7 361.7L878.6 359.5L880.4 357.9L881.8 357.0L882.6 353.9L880.5 350.4L876.8 350.2L875.3 351.4L876.0 348.7L875.0 345.3L873.5 344.3L874.0 341.0L871.6 337.9L869.0 336.7L867.7 333.7L866.9 328.9L865.0 327.4L862.6 325.5L859.3 325.7L858.4 325.3L862.3 323.1L860.3 321.7L862.9 319.6L864.6 315.7L866.0 312.6L865.0 310.9L859.0 310.7L854.5 312.8L856.6 309.4L855.6 309.3L859.9 304.2L860.2 302.4L857.8 302.9L850.9 302.6L849.5 306.0L850.2 309.1L847.1 309.6L846.9 313.2L847.5 314.6L847.0 317.0L845.1 319.3L848.7 322.0L848.1 324.7L847.3 331.3L849.0 326.6L852.0 325.9L852.6 329.9L850.2 333.8L851.6 336.8L853.7 336.4L857.5 334.9L860.0 334.2L857.3 337.9L859.2 341.1L861.0 341.1L860.0 343.5L860.3 346.5L857.9 347.3L854.3 346.5L852.4 347.5L853.7 348.8L851.9 351.4L855.0 350.5L855.3 353.5L853.9 355.9L850.5 357.3L849.5 358.3L850.0 360.0L853.8 359.6L855.8 360.6L859.0 362.1L860.4 361.0L861.9 360.2L860.4 362.5L860.0 363.5L855.0 363.5L853.1 365.0L852.1 367.6L850.5 369.4L848.6 370.9ZM838.5 331.5L835.4 332.6L834.4 334.1L833.0 336.4L835.8 336.9L834.2 339.5L831.1 339.9L827.4 339.5L826.2 342.2L829.2 343.5L828.1 345.0L826.3 346.7L831.8 348.3L829.8 350.2L827.7 353.2L830.2 353.1L828.1 355.5L825.1 356.8L828.3 356.8L825.7 358.3L829.2 358.6L826.4 360.8L829.9 360.0L828.2 361.7L832.3 361.1L835.5 359.1L838.7 357.0L841.8 356.6L844.4 356.3L845.2 353.3L846.2 350.1L845.9 346.8L845.1 343.5L844.5 342.1L846.7 340.3L848.9 338.7L848.4 336.7L847.1 335.0L845.5 332.0L841.9 332.2L839.7 330.7ZM933.9 454.1L937.9 455.6L942.2 458.5L945.4 459.4L946.4 457.1L945.4 455.0L947.6 449.8L942.6 451.1L937.2 450.2L935.1 451.1L933.0 452.6ZM912.7 435.6L914.2 439.9L913.9 444.8L916.0 446.0L917.2 444.2L919.8 443.6L920.5 436.2L919.6 433.1L917.7 431.6L913.9 433.8L913.0 433.8ZM914.9 426.8L915.8 429.4L917.7 430.8L918.6 429.4L919.1 423.0L918.4 420.5L914.9 424.3ZM985.4 467.7L991.1 469.4L997.2 469.0L998.1 467.3L992.0 466.6L988.3 465.5L985.0 466.1ZM1026.8 470.4L1029.7 471.5L1034.4 469.0L1037.2 465.0L1033.0 467.0L1029.2 466.7L1026.4 468.7ZM887.1 442.4L889.0 443.6L890.6 440.9L889.0 439.6L885.5 441.8ZM881.9 446.3L881.9 444.8L880.0 446.0ZM892.5 439.7L894.2 440.2L894.6 439.3L892.3 439.0ZM985.4 448.1L988.3 450.8L990.1 451.4L988.3 447.8L985.0 445.4L982.4 446.0ZM1006.6 463.2L1007.1 460.6L1004.7 462.3ZM997.2 445.4L999.6 445.1L998.6 443.3L996.0 444.2ZM997.2 450.2L997.4 448.1L996.3 448.1ZM926.2 332.2L927.1 336.3L930.9 336.3L931.8 332.2L933.7 328.9L933.7 325.1L929.9 325.9L926.6 328.0ZM921.4 333.0L924.3 333.8L925.2 331.3L923.8 328.9L920.5 329.7ZM960.0 317.8L962.9 314.4L965.2 308.7L962.4 309.1L959.6 314.4ZM952.5 323.8L954.9 314.4L954.1 314.4L951.6 323.8ZM977.9 308.7L980.3 306.4L984.0 304.7L983.6 302.9L977.9 302.9L977.0 305.6ZM980.3 301.9L982.6 300.6L980.7 298.3L978.4 300.1ZM969.4 289.5L969.9 286.2L966.1 288.1ZM945.7 333.8L945.4 331.3L943.6 333.0ZM840.5 271.5L842.4 275.5L844.8 268.5L843.3 267.0L839.6 269.5ZM868.3 291.4L869.2 289.0L870.6 282.3L868.3 283.3L866.9 290.9ZM861.7 301.0L862.6 297.4L860.3 296.5L858.4 299.7ZM839.1 311.8L839.6 315.3L841.0 311.8L844.3 309.1L845.5 306.4L845.2 303.8L841.5 308.2ZM845.7 316.6L847.8 315.3L844.8 310.9L842.6 313.1ZM844.5 323.0L847.1 323.0L847.6 321.3L844.8 320.8ZM845.7 328.9L847.6 325.5L845.7 326.4L843.8 327.2ZM854.2 340.3L853.7 338.7L851.8 341.1ZM937.9 204.0L945.0 200.9L951.1 191.9L947.3 190.6L942.6 197.1L935.1 204.7ZM959.1 187.9L958.1 183.3L953.4 187.9ZM797.2 507.7L798.6 504.7L794.9 505.8ZM801.9 509.0L801.9 506.9L800.1 507.7ZM807.6 507.1L810.9 502.9L811.1 501.2L809.2 503.9L806.2 507.1ZM790.4 505.3L790.9 503.4L789.7 503.4ZM795.4 482.3L795.8 481.5L793.2 481.5ZM755.8 453.2L756.1 452.3L752.8 452.3ZM741.2 449.0L742.7 448.7L740.3 447.8ZM746.4 447.5L747.1 446.9L745.7 446.6ZM763.4 574.1L764.1 573.6L762.7 572.1ZM756.3 564.3L756.8 563.1L755.4 563.3ZM760.1 574.6L760.1 573.4L759.1 574.1ZM799.6 592.9L800.1 591.0L797.7 591.5ZM915.3 629.7L916.3 627.3L914.2 627.6ZM905.5 644.8L906.2 643.6L905.0 643.4ZM909.1 637.7L909.5 637.5L909.0 637.0ZM603.9 389.7L611.4 389.7L614.2 394.5L619.4 394.9L621.3 391.8L622.2 396.2L624.6 396.2L626.7 390.4L624.6 389.7L625.0 383.0L622.7 382.6L622.2 376.9L615.6 377.6L611.9 372.9L607.2 374.0L610.9 367.4L613.3 360.6L610.9 360.6L604.8 367.4L601.5 375.4L595.9 383.3L599.6 383.3L595.4 389.7ZM575.2 376.9L579.9 378.7L584.1 379.0L578.0 374.0L570.9 373.6ZM575.6 399.7L580.3 400.7L582.7 397.6L578.0 397.9L573.3 393.8L571.4 396.6ZM584.1 391.8L585.5 389.7L583.2 391.8ZM531.9 434.7L536.1 432.8L534.2 432.5L528.6 433.8L526.2 435.6ZM273.1 371.8L281.6 377.6L287.7 383.0L293.8 384.4L293.3 381.9L284.9 371.1L276.9 368.1L270.3 366.6ZM250.0 345.9L253.3 351.4L258.0 357.6L253.8 348.3L254.8 341.1L248.2 340.7ZM148.4 318.3L152.7 316.1L158.3 312.6L156.4 308.2L150.8 309.1L147.0 312.6ZM158.3 306.9L158.3 303.8L154.5 305.1ZM91.0 291.8L94.8 289.9L92.4 286.6L86.8 288.1ZM71.7 256.2L76.9 259.8L80.2 257.2L74.5 254.1L67.5 253.0L66.6 256.2ZM62.3 287.1L63.7 286.6L60.9 285.2ZM87.3 347.1L92.0 344.3L91.0 341.9L84.9 347.5ZM80.7 350.6L84.4 347.5L84.0 345.9L79.3 350.6ZM55.3 356.8L55.7 354.9L51.5 356.8ZM44.4 359.8L44.0 357.9L41.6 359.8ZM73.6 316.1L74.1 314.8L72.7 315.3ZM237.3 318.7L241.1 323.0L239.2 309.1L233.1 309.1ZM247.7 332.2L253.3 335.5L251.0 325.5L245.3 323.0ZM25.1 229.8L28.4 225.2L34.6 225.2L29.9 233.2L36.9 233.2L46.3 235.5L46.8 241.6L53.4 242.2L59.5 247.1L63.7 244.4L64.2 233.2L72.2 232.1L76.0 226.4L69.8 220.5L62.8 215.7L52.0 215.7L48.7 208.4L39.3 199.6L32.2 194.5L25.1 191.9ZM25.1 265.5L30.8 260.3L34.6 255.1L39.7 243.3L34.6 244.4L32.2 241.1L25.1 238.9ZM25.1 164.5L29.9 164.5L39.3 160.1L34.6 155.0L25.1 155.7ZM477.8 538.8L482.0 537.8L484.8 535.3L489.5 537.8L498.0 540.1L505.1 541.4L506.9 545.2L511.6 546.9L508.8 549.7L521.5 549.4L525.5 547.7L519.2 545.4L514.5 542.6L508.8 539.9L501.3 536.8L495.2 533.2L488.6 532.7L483.9 533.7L479.2 535.8L474.7 539.6ZM483.9 541.6L485.8 541.4L485.8 539.3L483.4 540.1ZM531.9 558.1L536.6 558.1L538.5 560.9L542.2 557.9L545.0 556.9L550.9 557.9L552.8 555.9L548.8 552.4L545.0 550.4L537.1 549.4L531.9 549.2L529.1 550.4L531.9 553.4L531.9 556.6L524.3 555.7L523.9 557.1ZM506.5 558.1L511.2 560.1L515.4 559.6L515.9 558.4L512.6 556.9L508.4 556.4L505.8 557.4ZM558.2 559.1L564.3 559.1L565.8 557.6L563.9 556.4L558.0 556.9ZM583.2 597.5L587.4 597.0L587.9 593.6L583.2 594.4ZM507.4 527.6L509.3 527.1L508.4 522.9L506.0 522.9ZM510.7 516.1L512.1 518.2L511.6 515.1L508.4 513.5ZM505.5 515.3L507.4 514.3L502.7 514.6ZM530.5 544.1L530.5 542.4L527.6 543.4ZM515.2 522.9L516.1 525.0L515.9 521.9L513.1 520.8ZM585.0 569.0L586.5 566.5L583.6 567.2ZM587.9 576.5L588.1 575.1L586.5 574.3ZM585.7 572.6L586.2 571.2L585.0 570.7ZM587.2 579.9L588.0 578.7L587.0 578.0ZM594.2 583.1L594.8 582.6L593.7 581.8ZM574.2 593.4L574.2 592.2L571.4 592.7ZM550.2 587.9L550.9 587.9L549.0 586.4ZM570.0 484.5L570.2 483.7L569.0 484.3ZM465.3 547.7L466.2 546.2L464.8 546.2ZM451.9 140.5L455.7 163.0L462.7 173.0L476.8 177.1L488.6 179.9L495.6 177.1L502.7 181.2L509.8 181.2L519.2 193.2L528.6 199.6L534.2 209.6L529.5 221.7L528.6 233.2L523.9 233.2L509.8 234.4L507.4 244.4L514.5 247.6L526.2 245.5L535.6 253.0L545.5 262.9L561.5 271.5L566.2 271.5L561.5 265.5L552.1 252.5L566.2 261.4L570.0 256.2L563.9 242.2L554.5 224.0L559.2 224.0L566.2 231.0L575.2 240.0L580.3 232.1L586.0 220.5L570.9 205.9L559.2 193.2L556.8 183.9L551.6 170.2L540.3 163.0L535.6 140.5ZM466.9 240.0L469.8 247.6L464.6 254.6L472.1 257.2L482.5 248.7L487.2 253.0L496.6 253.0L490.9 247.6L482.9 238.9L479.2 229.8L473.1 228.7L465.1 235.5ZM484.8 267.5L489.1 265.0L489.1 261.4L483.4 261.4ZM497.1 272.5L499.9 274.5L500.4 266.5L496.1 266.5ZM508.4 259.3L509.8 258.3L505.5 255.1ZM554.9 288.5L555.9 284.7L552.1 284.2ZM568.6 277.5L570.5 275.5L566.7 274.5ZM498.9 326.4L502.7 325.5L501.8 321.3L498.0 320.4ZM489.5 351.4L493.8 351.8L494.2 349.1L488.6 349.1ZM512.1 212.1L517.8 212.1L517.8 202.2L509.8 203.4ZM505.1 208.4L507.4 203.4L501.3 203.4ZM411.0 195.8L420.4 197.1L426.0 190.6L422.7 182.6L414.3 178.5L406.3 189.3ZM323.9 140.5L321.6 168.8L333.3 177.1L340.4 187.9L326.3 185.3L331.0 191.9L340.4 197.1L356.9 194.5L375.7 191.9L382.7 197.1L396.8 190.6L395.9 181.2L389.8 173.0L400.1 174.4L399.2 163.0L387.4 155.7L380.4 140.5ZM283.9 140.5L282.5 149.7L294.7 161.6L305.1 157.2L309.8 140.5ZM396.8 140.5L403.9 151.2L413.3 154.2L420.4 140.5ZM425.1 140.5L429.8 146.7L436.8 140.5ZM140.7 552.4L142.1 554.3L146.1 551.4L144.2 549.2L141.1 547.6L140.2 550.2ZM138.1 545.9L140.4 545.4L139.5 544.1L137.1 544.1ZM130.5 542.5L132.4 541.6L129.8 541.1ZM124.2 539.4L124.9 537.8L122.8 538.1ZM135.7 543.5L136.9 543.0L134.3 542.9ZM233.1 312.6L236.9 318.7L243.9 327.2L247.7 336.3L255.7 336.3L260.4 333.8L255.7 325.5L243.9 304.7L232.2 305.6Z" fill="#b2e3c0"/><path d="M608.6 140.5L618.0 157.2L629.7 163.0L618.0 167.3L634.4 177.1L636.8 187.9L634.0 191.9L625.5 194.5L621.7 216.3L625.5 234.4L631.2 247.6L636.8 260.3L640.6 270.5L646.2 280.4L658.0 284.2L667.9 291.8L672.1 285.2L674.4 275.5L676.8 265.5L681.5 257.2L683.8 246.6L688.6 236.6L697.5 231.0L705.0 228.7L714.4 222.8L723.8 207.2L733.2 202.2L745.0 198.3L754.4 187.9L769.9 175.1L756.8 171.6L749.7 164.5L759.1 160.1L770.9 170.2L772.3 155.7L768.5 140.5Z" fill="#fff"/><g clip-path="url(#lc)"><g filter="url(#rg)"><path d="M92.0 197.0L107.0 175.0L140.0 156.0L170.0 166.0L211.0 178.0L211.0 190.0L190.0 184.0L180.0 187.0L162.0 182.0L150.0 187.0L140.0 182.0L135.0 195.0L127.0 210.0L115.0 217.0L110.0 210.0Z" fill="#c9eed4"/><path d="M80.0 232.0L115.0 217.0L140.0 220.0L135.0 225.0L122.0 227.0L115.0 235.0L102.0 242.0L88.0 242.0Z" fill="#c9eed4"/><path d="M88.0 272.0L105.0 258.0L115.0 275.0L122.0 285.0L115.0 302.0L98.0 294.0Z" fill="#c9eed4"/><path d="M112.0 300.0L145.0 295.0L165.0 280.0L172.0 290.0L150.0 312.0L125.0 328.0L100.0 338.0L60.0 350.0L95.0 325.0Z" fill="#c9eed4"/><path d="M240.0 187.0L275.0 168.0L290.0 187.0L310.0 178.0L330.0 200.0L315.0 207.0L280.0 210.0L245.0 217.0L240.0 207.0Z" fill="#c9eed4"/><path d="M332.0 205.0L345.0 225.0L365.0 255.0L382.0 285.0L400.0 300.0L435.0 306.0L470.0 300.0L470.0 150.0L420.0 150.0L340.0 188.0Z" fill="#c9eed4"/><path d="M322.0 150.0L396.0 150.0L396.0 196.0L322.0 196.0Z" fill="#b2e3c0"/><path d="M470.0 150.0L610.0 150.0L610.0 275.0L470.0 275.0Z" fill="#c9eed4"/><path d="M535.0 230.0L552.0 222.0L572.0 255.0L565.0 268.0L548.0 250.0Z" fill="#b2e3c0"/><path d="M505.0 265.0L555.0 265.0L560.0 300.0L530.0 312.0L510.0 300.0Z" fill="#c9eed4"/><path d="M432.0 300.0L445.0 312.0L470.0 322.0L488.0 332.0L488.0 346.0L470.0 338.0L450.0 328.0L435.0 318.0Z" fill="#c9eed4"/><path d="M537.0 328.0L560.0 326.0L562.0 340.0L540.0 342.0Z" fill="#c9eed4"/><path d="M292.0 240.0L315.0 245.0L345.0 250.0L345.0 267.0L327.0 280.0L312.0 280.0L305.0 260.0Z" fill="#c9eed4"/><path d="M320.0 300.0L340.0 292.0L365.0 295.0L390.0 300.0L377.0 310.0L327.0 310.0Z" fill="#c9eed4"/><path d="M335.0 342.0L365.0 347.0L402.0 347.0L425.0 370.0L430.0 380.0L450.0 392.0L482.0 402.0L505.0 392.0L530.0 395.0L540.0 404.0L520.0 411.0L507.0 425.0L487.0 430.0L465.0 445.0L440.0 455.0L440.0 480.0L400.0 502.0L375.0 482.0L380.0 445.0L390.0 420.0L372.0 402.0L340.0 380.0Z" fill="#c9eed4"/><path d="M476.0 498.0L506.0 498.0L506.0 530.0L476.0 530.0Z" fill="#c9eed4"/><path d="M470.0 528.0L530.0 528.0L530.0 552.0L470.0 552.0Z" fill="#c9eed4"/><path d="M443.0 538.0L468.0 538.0L468.0 563.0L443.0 563.0Z" fill="#c9eed4"/><path d="M527.0 618.0L560.0 613.0L563.0 630.0L530.0 636.0Z" fill="#c9eed4"/><path d="M823.6 363.6L849.5 363.6L849.5 328.9L823.6 328.9Z" fill="#c9eed4"/><path d="M852.0 378.0L878.0 378.0L882.0 398.0L888.0 420.0L872.0 422.0L866.0 400.0L854.0 392.0Z" fill="#c9eed4"/><path d="M850.0 426.0L872.0 424.0L876.0 444.0L862.0 456.0L848.0 446.0Z" fill="#c9eed4"/><path d="M1010.0 350.0L1030.0 335.0L1078.0 328.0L1078.0 403.0L1060.0 395.0L1045.0 403.0L1020.0 395.0L1010.0 406.0L980.0 406.0L977.0 387.0L995.0 382.0L1010.0 370.0Z" fill="#c9eed4"/><path d="M963.0 350.0L1010.0 350.0L1010.0 372.0L980.0 386.0L963.0 376.0Z" fill="#c9eed4"/><path d="M1016.0 438.0L1032.0 436.0L1036.0 446.0L1030.0 455.0L1019.0 452.0Z" fill="#c9eed4"/><path d="M1050.0 440.0L1078.0 436.0L1078.0 452.0L1055.0 452.0Z" fill="#c9eed4"/><path d="M945.0 195.0L970.0 187.0L987.0 195.0L982.0 212.0L968.0 228.0L952.0 238.0L941.0 226.0L942.0 210.0Z" fill="#c9eed4"/><path d="M900.0 287.0L914.0 262.0L925.0 262.0L921.0 280.0L911.0 298.0Z" fill="#c9eed4"/><path d="M992.0 207.0L1010.0 210.0L1012.0 232.0L1025.0 255.0L1020.0 270.0L1002.0 275.0L995.0 250.0L997.0 225.0Z" fill="#c9eed4"/><path d="M1032.0 192.0L1065.0 200.0L1067.0 217.0L1045.0 222.0L1032.0 210.0Z" fill="#c9eed4"/><path d="M965.0 177.0L1005.0 160.0L1027.0 177.0L1010.0 190.0L982.0 192.0L970.0 187.0Z" fill="#c9eed4"/><path d="M1025.0 570.0L1045.0 568.0L1047.0 588.0L1027.0 590.0Z" fill="#c9eed4"/><path d="M756.8 260.3L813.2 260.3L813.2 215.7L756.8 215.7Z" fill="#c9eed4"/><path d="M848.5 372.5L883.8 372.5L883.8 329.7L848.5 329.7Z" fill="#c9eed4"/><path d="M926.0 300.0L955.0 300.0L955.0 325.0L926.0 325.0Z" fill="#c9eed4"/><path d="M770.0 563.0L795.0 563.0L845.0 562.0L875.0 563.0L895.0 570.0L927.0 573.0L945.0 580.0L980.0 578.0L982.0 588.0L1002.0 590.0L1025.0 588.0L1030.0 575.0L1045.0 573.0L1057.0 563.0L1070.0 575.0L1080.0 580.0L1080.0 458.0L1042.0 458.0L1040.0 478.0L935.0 478.0L925.0 466.0L915.0 462.0L890.0 462.0L872.0 468.0L865.0 480.0L852.0 492.0L838.0 499.0L826.0 499.0L812.0 499.0L770.0 540.0Z" fill="#f5f1e4"/><path d="M318.0 408.0L330.0 404.0L350.0 408.0L352.0 430.0L345.0 446.0L325.0 444.0L316.0 428.0Z" fill="#f5f1e4" fill-opacity=".8"/><path d="M303.0 388.0L318.0 386.0L326.0 396.0L322.0 408.0L306.0 404.0Z" fill="#f5f1e4" fill-opacity=".55"/><path d="M357.0 388.0L374.0 388.0L376.0 402.0L360.0 403.0Z" fill="#f5f1e4" fill-opacity=".6"/><path d="M322.0 452.0L350.0 448.0L374.0 455.0L378.0 480.0L390.0 500.0L372.0 505.0L350.0 490.0L335.0 478.0Z" fill="#f5f1e4" fill-opacity=".65"/><path d="M321.6 482.6L335.2 482.6L361.6 536.3L342.7 536.3Z" fill="#f5f1e4"/><path d="M523.4 561.3L553.5 561.3L553.5 548.4L523.4 548.4Z" fill="#f5f1e4"/><path d="M776.0 234.0L800.0 232.0L803.0 248.0L790.0 256.0L776.0 250.0Z" fill="#f5f1e4"/><path d="M422.0 157.0L440.0 157.0L442.0 182.0L424.0 182.0Z" fill="#f5f1e4"/><path d="M510.0 198.0L523.0 198.0L523.0 214.0L510.0 214.0Z" fill="#f5f1e4"/><path d="M540.0 200.0L556.0 200.0L558.0 218.0L544.0 220.0Z" fill="#f5f1e4"/><path d="M968.0 176.0L992.0 166.0L998.0 178.0L978.0 186.0Z" fill="#f5f1e4"/><path d="M787.4 510.9L813.2 510.9L813.2 499.6L787.4 499.6Z" fill="#f5f1e4"/><path d="M984.0 470.1L999.1 470.1L999.1 465.0L984.0 465.0Z" fill="#f5f1e4"/><path d="M116.9 556.4L149.8 556.4L149.8 535.8L116.9 535.8Z" fill="#f5f1e4"/><path d="M145.1 320.4L159.2 320.4L159.2 306.4L145.1 306.4Z" fill="#f5f1e4"/><path d="M85.8 293.7L95.7 293.7L95.7 285.2L85.8 285.2Z" fill="#f5f1e4"/><path d="M65.1 261.4L81.6 261.4L81.6 251.9L65.1 251.9Z" fill="#f5f1e4"/><path d="M131.0 323.8L142.8 311.8L147.5 315.3L135.7 327.2Z" fill="#f5f1e4" fill-opacity=".7"/><path d="M608.6 140.5L618.0 157.2L629.7 163.0L618.0 167.3L634.4 177.1L636.8 187.9L634.0 191.9L625.5 194.5L621.7 216.3L625.5 234.4L631.2 247.6L636.8 260.3L640.6 270.5L646.2 280.4L658.0 284.2L667.9 291.8L672.1 285.2L674.4 275.5L676.8 265.5L681.5 257.2L683.8 246.6L688.6 236.6L697.5 231.0L705.0 228.7L714.4 222.8L723.8 207.2L733.2 202.2L745.0 198.3L754.4 187.9L769.9 175.1L756.8 171.6L749.7 164.5L759.1 160.1L770.9 170.2L772.3 155.7L768.5 140.5ZM616.1 182.6L622.7 187.3L629.7 181.2L625.0 173.0L616.6 173.0Z" fill="#ffffff"/><path d="M612.0 170.0L634.0 170.0L634.0 190.0L612.0 190.0Z" fill="#f5f1e4"/><path d="M505.1 560.9L516.3 560.9L516.3 555.9L505.1 555.9Z" fill="#f5f1e4"/><path d="M557.3 559.9L566.2 559.9L566.2 555.9L557.3 555.9Z" fill="#f5f1e4"/><path d="M619.4 191.9L634.4 191.9L634.9 215.7L634.9 234.4L625.0 234.4L620.3 221.7L617.5 209.6Z" fill="#b2e3c0" fill-opacity=".75"/><path d="M625.0 234.4L634.9 234.4L638.2 251.9L631.6 251.9Z" fill="#b2e3c0" fill-opacity=".45"/><path d="M622.2 197.1L633.5 199.6L634.4 221.7L626.9 221.7Z" fill="#c9eed4"/><path d="M502.0 155.0L540.0 155.0L560.0 182.0L572.0 210.0L585.0 220.0L575.0 237.0L565.0 225.0L550.0 205.0L535.0 195.0L522.0 175.0L525.0 165.0Z" fill="#ffffff"/><path d="M162.5 202.5L180.0 191.0L190.0 185.0L203.7 186.0L203.7 196.0L190.0 196.0L180.0 200.0L171.0 207.5Z" fill="#ffffff"/><path d="M172.5 266.0L180.0 265.0L190.0 280.0L200.0 282.5L195.0 267.5L205.0 267.5L220.0 275.0L227.5 290.0L232.5 300.0L225.0 297.5L212.5 287.5L190.0 285.0L180.0 280.0L175.0 290.0L172.5 280.0Z" fill="#ffffff"/><path d="M266.0 237.5L277.5 245.0L272.5 250.0L282.5 262.5L281.0 270.0L274.0 274.0L267.5 257.5L264.0 252.5Z" fill="#ffffff"/></g></g><path d="M1011.3 431.9L1013.7 432.0L1018.8 432.5L1020.3 432.5L1024.0 430.3L1026.8 428.4L1033.3 427.0L1039.8 426.7L1043.5 428.6L1045.3 431.3L1052.7 433.1L1055.1 433.6L1061.3 433.1L1065.0 432.9L1070.3 429.1L1070.4 425.9L1067.3 420.5L1061.3 416.6L1058.2 413.3L1052.2 409.4L1049.9 408.0L1047.1 406.0L1046.6 405.7L1041.0 407.2L1035.2 410.7L1033.2 411.4L1032.0 410.0L1031.3 406.0L1027.3 405.0L1033.0 399.7L1031.1 400.0L1025.0 400.0L1026.4 397.3L1022.8 396.6L1019.1 397.4L1014.1 406.4L1009.2 412.9L1008.4 418.1L1005.8 419.2L1003.8 423.7L1006.1 427.6L1007.1 429.7L1010.7 432.8ZM1047.1 405.4L1050.4 405.4L1053.9 400.3L1054.5 395.9L1059.3 393.1L1057.4 392.4L1051.1 393.1L1047.5 395.6L1041.4 397.3L1038.1 400.0L1040.5 404.7L1045.9 404.7ZM997.7 439.0L998.6 438.7L1002.8 436.9L1006.0 437.2L1010.4 437.0L1012.1 435.3L1015.1 434.7L1010.7 433.1L1003.8 433.3L1000.0 436.5ZM441.5 395.9L446.7 396.6L447.2 394.2L454.2 394.7L461.3 390.6L458.2 394.5L463.2 396.9L469.8 396.1L474.7 395.4L476.8 397.3L475.9 391.8L474.9 387.2L472.1 386.9L467.4 381.6L459.4 380.1L454.7 384.0L452.8 387.1L448.6 389.7L441.1 395.6ZM475.7 401.7L468.6 401.0L464.8 402.4L460.4 410.4L463.2 408.0L465.1 405.4L462.7 411.0L460.8 420.1L462.2 427.8L463.7 429.2L465.5 428.6L467.4 426.2L468.4 419.0L467.7 414.3L468.6 409.8L471.7 406.0L473.3 405.2L474.7 404.9ZM477.0 403.0L480.1 404.5L481.9 406.9L481.8 412.3L479.9 416.3L483.9 413.5L485.5 415.0L486.7 420.5L489.9 415.6L491.6 410.7L490.2 405.7L493.5 410.0L497.1 410.7L498.9 408.7L497.5 405.0L490.0 400.3L483.9 399.3L479.2 400.7L475.9 401.7ZM485.3 430.3L490.0 430.0L494.2 427.5L497.5 426.0L501.1 423.8L503.3 421.3L501.5 421.3L497.5 423.0L492.4 422.7L489.3 425.1L486.2 427.4L483.3 426.5L481.8 428.7ZM502.4 418.7L504.1 418.2L509.3 418.9L512.1 418.7L514.5 417.4L515.9 415.0L514.5 412.5L512.4 414.6L506.6 414.3L503.4 414.8L500.8 416.4L498.9 418.5ZM421.3 368.1L421.3 364.4L420.4 359.8L418.0 354.9L416.6 347.5L414.3 344.3L412.4 343.1L408.6 344.3L407.4 348.7L409.5 350.6L413.3 355.3L416.6 357.6L418.5 359.8L419.0 364.4L418.0 367.9L419.0 369.6ZM411.9 370.3L409.1 365.1L406.3 359.8L404.8 361.4L408.6 368.1ZM404.8 353.7L402.5 348.3L399.7 349.8L402.5 353.7L404.8 359.1ZM323.9 278.4L329.6 281.8L338.0 280.4L339.4 278.4L345.1 276.5L352.1 270.5L360.6 263.4L356.9 261.4L348.4 263.4L340.4 267.5L336.4 266.0L328.6 262.4L331.9 268.5L326.3 274.5L321.1 277.0ZM298.0 235.5L302.7 234.4L307.4 238.9L309.8 231.0L319.2 235.5L321.6 227.5L312.2 224.0L319.2 216.3L307.4 216.9L295.7 216.9L284.4 223.4L286.7 227.5L293.8 236.6ZM356.9 301.0L368.6 299.2L378.0 298.3L380.4 295.5L375.7 294.2L359.2 295.1L356.9 297.8L351.2 301.9ZM395.4 321.3L397.3 313.5L395.4 307.3L391.7 314.4L392.6 322.1ZM460.4 375.4L459.9 370.3L456.1 370.3L455.2 376.2ZM431.7 379.8L431.2 374.7L427.4 375.4L426.5 379.8ZM547.4 224.0L545.0 216.9L538.9 216.9L538.0 227.5ZM541.3 242.2L542.7 237.7L538.9 236.6L536.6 242.2ZM397.8 262.4L401.5 258.3L396.8 254.1L392.1 260.3ZM425.1 250.3L429.8 248.7L425.1 246.6L420.4 249.8ZM472.6 592.4L475.4 591.5L473.1 588.1L470.2 588.6ZM537.5 593.2L535.6 596.3L534.7 600.1L536.6 602.2L540.3 601.0L540.3 597.7L538.5 594.4ZM528.1 368.8L531.9 362.9L528.6 362.9L525.3 368.8ZM574.2 344.3L575.6 338.7L570.9 338.7L568.6 345.1ZM594.5 344.7L600.6 340.7L596.8 341.1L591.2 345.5ZM346.5 434.4L347.0 430.6L344.6 429.4L343.2 433.1ZM493.8 514.6L494.9 513.5L494.2 511.9L492.8 512.4ZM529.5 414.0L530.5 407.4L529.5 407.4L528.8 416.6ZM1024.0 289.0L1027.8 285.2L1029.2 279.4L1025.0 274.5L1019.8 274.5L1016.0 281.4L1019.8 290.4ZM1044.7 278.4L1045.2 272.5L1041.9 264.5L1038.6 263.4L1036.3 272.5L1040.5 280.4ZM936.5 304.7L940.7 301.0L939.8 296.5L935.6 296.5L932.7 303.8ZM942.2 310.4L944.5 302.9L942.6 301.9L941.2 310.0ZM951.1 296.5L958.1 296.0L958.1 293.7L950.6 295.1ZM1003.8 309.1L1005.7 304.7L1005.2 300.1L1001.9 299.2L1001.4 307.3ZM1010.8 277.5L1012.3 269.5L1007.1 270.5L1005.2 278.4ZM1006.1 193.8L1008.5 189.3L1004.3 187.9L1001.4 193.2ZM1022.1 307.8L1023.5 305.6L1021.7 304.2L1020.3 307.3ZM1056.0 307.3L1057.0 302.9L1053.2 300.1L1051.8 306.4ZM1032.5 395.6L1037.2 391.8L1039.5 389.7L1035.3 390.4L1031.1 395.2ZM1032.0 448.4L1033.0 446.6L1031.1 445.4L1030.1 447.8ZM1078.6 449.6L1079.5 446.0L1075.8 445.7L1073.9 449.0ZM1035.3 654.4L1035.8 646.9L1034.8 644.1L1031.5 642.9L1026.4 644.1L1024.0 648.3L1023.5 654.4ZM1043.8 628.5L1044.5 633.5L1046.1 633.2L1046.6 629.9L1045.2 624.3L1043.8 623.8ZM1019.3 640.3L1021.7 637.0L1022.4 634.2L1020.3 634.4L1017.4 639.8ZM1028.3 638.6L1031.1 638.6L1031.5 637.5L1027.8 637.9ZM1050.8 589.8L1051.3 587.6L1049.4 586.9L1048.5 589.6ZM942.6 585.2L944.5 583.8L943.1 581.4L940.3 581.4L939.8 584.7ZM1028.3 529.1L1025.0 534.8L1021.7 537.8L1022.6 538.8L1026.4 535.8L1029.2 528.9ZM875.3 614.3L874.4 610.6L871.1 606.8L868.8 605.8L870.2 609.6L873.9 614.8ZM896.5 597.7L896.5 594.4L895.1 594.4L895.3 597.7ZM1041.7 490.9L1041.9 487.6L1041.2 487.3L1041.0 490.9ZM1014.6 648.3L1015.1 645.9L1013.2 645.5L1012.7 648.3Z" fill="#a5d5fe"/><path d="M211.0 181.9L211.0 287.1L219.5 289.0L227.5 299.2L232.2 295.1L236.9 291.8L239.2 296.5L246.8 304.7L253.8 318.7L262.3 324.7L262.8 332.2L260.4 336.3L246.3 336.7M287.2 383.3L294.3 384.8L295.7 381.2L294.3 379.8L426.7 379.8L426.7 376.9L428.4 377.6L429.3 381.9L434.5 383.0L439.2 384.0L443.9 386.2L447.2 385.5L452.8 386.9L458.5 384.8L467.4 390.4L474.9 394.5L476.8 397.3L478.7 398.6L481.1 400.0L481.5 402.0L486.2 405.4L488.1 416.6L486.7 420.5L486.2 423.0L483.4 425.6L483.4 426.8L486.7 428.7L492.4 425.6L502.7 421.8L502.5 418.9L501.8 417.6L504.1 416.4L513.1 416.4L514.9 413.3L517.8 411.4L522.9 407.4L538.0 407.4L538.5 405.7L541.3 405.4L543.6 401.3L545.0 395.9L548.8 390.7L550.2 392.4L553.0 391.4L555.4 393.5L555.4 402.7L557.3 405.4L557.8 406.4L559.2 408.7M323.4 483.0L334.7 482.0L334.3 483.1L351.7 489.6L365.3 489.6L365.3 487.1L373.3 487.1L380.4 493.4L382.7 499.1L388.8 502.3L391.2 498.5L397.3 498.2L402.5 506.1L406.3 510.3L408.1 516.1L417.3 518.5M440.6 575.8L440.6 572.1L443.0 568.4L448.8 568.4L449.1 566.8L444.4 562.6L446.2 562.6L446.2 559.8L454.9 559.8L454.9 558.9L458.9 556.4M454.9 559.8L454.7 569.2L456.1 569.2M459.4 570.2L454.7 576.5L454.0 576.5L450.5 579.7M454.0 576.5L458.0 578.6L461.3 578.9L461.5 581.4M463.7 583.3L466.5 581.8L466.5 579.4L470.7 579.2L474.9 574.6L482.9 573.6M471.2 592.5L475.9 592.7L480.8 593.3M486.0 599.8L484.4 602.0L484.6 605.8L484.4 607.0M510.5 604.0L509.8 607.2L507.9 610.9M538.9 588.8L534.2 592.4L530.9 598.7L533.3 605.3L533.8 610.1L544.6 612.0L547.9 616.2L556.8 615.8L555.2 623.8L557.8 629.0L555.2 631.8L558.2 634.2L559.8 639.2M503.4 638.4L508.8 641.2L520.1 645.5L520.6 649.7M559.8 639.2L558.7 637.0L546.0 637.0L545.8 640.0L548.8 640.3L547.6 641.7L544.8 642.4L544.8 645.9L546.9 647.4L545.5 652.1M559.8 639.2L562.5 641.5L566.2 640.8L573.3 635.8L576.1 634.6L573.3 633.2L572.3 625.7L578.9 627.6L579.4 626.2L587.4 623.8L588.8 620.5M588.8 620.5L585.5 617.0L586.9 613.4L590.7 612.0L588.8 609.6L593.0 605.8M588.8 620.5L592.1 621.0L592.2 623.8L594.5 626.4L592.8 628.0L592.3 632.8L593.7 636.5L597.7 639.4L601.5 637.9L608.6 635.8M605.5 617.0L604.8 621.4L602.0 623.3L601.3 626.2L603.4 629.2L608.6 635.8M620.3 617.9L618.2 621.4L620.3 628.0L617.5 634.2M608.6 635.8L610.9 636.3L611.4 633.2L617.5 634.2L621.3 634.2L625.5 634.6L629.7 629.0L631.4 625.7M536.8 550.4L537.1 555.2L535.6 555.9L536.8 558.6M928.3 299.2L929.9 290.9L933.2 288.1L932.3 280.4L934.9 277.0L931.6 273.5L932.3 267.5L931.3 260.3L931.8 254.1L940.0 249.8L940.7 244.9L938.6 243.3L942.6 235.5L943.1 226.4L947.1 224.0L951.6 213.3L950.2 210.9L953.4 204.7L958.6 204.0L959.8 197.1L968.5 199.0L969.7 197.1L971.1 189.8M971.1 189.8L973.2 191.9L977.9 197.1L982.6 199.6L985.7 204.0L984.5 209.6L985.2 213.3L987.3 218.1L985.7 224.0L988.0 229.8M971.1 189.8L974.6 186.6L979.8 194.5L983.6 195.1L991.6 195.8L995.6 190.6L996.7 181.2L1005.7 176.0L1008.0 179.2L1012.3 183.9L1010.6 189.9M1010.6 189.9L1012.3 186.6L1016.0 181.9L1019.5 179.9M1010.6 189.9L1008.3 196.4L1015.3 207.2L1011.3 216.3L1016.0 231.0L1014.1 240.0L1018.1 248.7L1015.5 252.5L1023.1 261.4L1014.6 278.4L1005.2 284.7M1006.4 294.9L1005.7 296.5L1003.6 301.0L1003.8 306.4L1003.1 312.2M1003.1 312.2L999.1 312.2L993.4 307.8L989.0 309.3M1003.1 312.2L1005.4 314.4L1004.7 318.7L1006.8 324.2L1004.3 327.2L999.6 328.2M999.6 328.2L992.0 322.1L982.1 322.1L973.4 324.9M999.6 328.2L1000.5 331.3L995.8 334.6L994.6 339.5L989.2 342.7L985.0 342.3L981.7 339.0L981.2 334.2L974.6 331.8M981.7 339.0L967.6 338.3M985.0 342.3L986.8 352.2L983.6 355.6L985.7 361.4L987.8 366.2L981.0 375.8L980.5 379.2M985.7 361.4L994.4 358.3L1005.2 361.0L1012.3 361.7L1018.1 362.9L1020.0 357.2L1024.0 356.8M1006.8 324.2L1019.8 328.9L1019.3 335.5L1028.3 346.3L1022.1 348.3L1024.0 356.8L1033.4 354.9L1041.4 365.1L1050.8 369.6L1063.1 375.4L1061.7 387.6L1054.1 393.1M941.4 342.7L942.2 348.3L941.0 351.4L943.6 356.8L944.7 362.9L944.0 366.2L931.3 370.3L933.2 373.3L939.3 381.6L945.0 379.8L954.1 382.6M944.0 366.2L951.1 367.7L953.9 370.3L957.7 370.3L963.1 376.0L967.6 378.3L972.7 377.6L980.5 379.2L978.6 384.0M954.1 382.6L959.1 379.4L963.1 376.0M954.1 382.6L955.1 386.9L962.9 388.3L968.0 385.8L975.1 383.0L978.6 384.0L982.1 386.9L974.1 397.9L969.7 399.9M982.1 386.9L991.6 389.0L999.6 385.1L1006.6 394.5L1007.1 404.4L1013.9 405.4M999.6 385.1L1005.2 383.7L1011.6 387.2L1015.1 395.2L1016.0 397.9L1010.6 397.6L1007.1 404.4M955.1 386.9L950.2 394.9L952.5 397.6L955.8 401.0L962.9 401.3L963.8 401.0L969.7 399.9L975.6 406.0L975.1 408.7L980.0 409.4L981.2 412.7M981.2 412.7L982.6 415.3L993.9 416.4L1001.4 413.1L1009.0 415.7M981.2 412.7L979.8 415.9L982.6 419.5L979.6 424.9L982.4 430.9L989.7 429.7L996.7 430.9L998.4 428.7L1002.8 426.2L1006.1 427.0M998.4 428.7L999.6 430.9L997.0 434.8M968.5 441.2L971.6 438.7L973.2 434.1L982.4 430.9M973.2 434.1L970.9 431.3L971.3 427.8L968.7 423.4L965.4 427.7M971.3 427.8L976.0 425.3L979.6 424.9M963.8 401.0L965.7 406.0L963.8 408.4L965.4 408.0L964.3 412.0L966.6 414.3L965.0 417.2L961.2 423.4M968.7 423.4L970.1 421.4L965.0 417.2M963.8 408.4L953.9 405.7L948.5 406.0L948.5 408.7L956.7 419.8L961.2 423.4M952.5 397.6L947.8 399.3L946.4 404.4L938.4 404.0M950.2 394.9L942.9 397.9L938.9 397.1L938.4 402.0M832.7 427.7L835.8 426.0L843.3 427.2L845.2 429.4L841.9 432.9L842.2 437.8L841.5 441.3L839.0 441.3L841.5 444.8L840.1 448.7L841.5 450.2L839.1 454.1L839.6 456.3M865.9 418.0L867.8 420.1L870.9 420.8L877.7 421.4L877.7 422.4L881.2 423.0L882.6 423.7L883.8 424.6L889.3 424.1M840.3 333.4L838.9 335.9L836.1 338.3L838.9 340.9L840.1 341.0L841.5 338.7L843.1 341.5L844.9 341.1M915.1 334.6L918.9 335.5M1043.5 463.6L1047.1 461.8L1046.8 458.4L1053.2 458.4L1062.6 458.5L1073.7 456.8L1079.1 456.2M1069.9 429.9L1074.8 429.5L1078.8 432.5M1062.6 418.0L1074.4 419.2L1080.5 423.0M1043.5 471.0L1045.9 471.9L1046.6 473.6L1043.1 478.1L1041.9 478.9L1039.5 479.8M1035.4 489.7L1038.6 499.6M1038.9 499.3L1041.0 491.4L1041.7 483.7L1042.1 482.0L1047.8 484.3L1057.0 478.4L1058.8 485.1M1041.9 478.9L1042.1 482.0M1038.9 500.4L1044.0 501.2L1050.8 496.9L1053.2 494.2L1048.5 488.7L1057.9 485.9L1058.8 485.1L1064.5 486.2L1072.5 490.9L1079.1 495.3M1057.0 478.4L1067.3 472.4L1068.2 463.2L1073.7 456.8M864.0 468.5L866.2 470.4L865.9 485.1L868.5 485.4L860.3 487.6L857.2 491.7L851.3 494.2L847.6 499.1L841.0 499.3L833.6 503.9L833.6 511.4L833.6 518.2L817.9 518.2L817.9 531.4L813.2 533.7L812.8 542.2L794.4 542.2M833.6 511.4L851.7 523.4L843.8 523.4L848.5 571.2L830.6 571.2L823.1 573.1L820.3 570.7L817.0 574.8L810.9 568.2L806.2 565.5L797.7 566.3L796.8 568.5M851.7 523.4L879.8 543.4L880.0 545.2L889.5 549.9L889.9 553.9L894.4 553.2L901.7 551.7L909.5 544.7L930.9 531.2L921.2 526.0L918.6 517.2L920.7 507.7L921.0 497.5L919.3 495.5L917.2 485.4L913.5 483.1L909.7 475.8L913.2 471.0L914.9 457.7M919.3 495.5L922.9 492.0L922.9 487.6L928.7 483.4L928.7 479.4M930.9 531.2L941.2 535.8L945.0 533.7L987.3 551.4L987.3 548.9L992.0 548.9L992.0 538.8L992.0 501.2L990.6 495.8L992.7 488.4M992.0 538.8L1048.0 538.8M945.0 533.7L949.4 547.2L947.3 564.3L937.9 576.0L938.4 579.9M987.3 551.4L987.3 570.2L982.1 571.2L978.4 584.7L982.1 592.9M894.4 553.2L894.4 568.7L890.9 571.9L880.5 572.1L875.6 573.8L870.9 573.4L865.0 577.5L861.0 578.5L854.2 582.6L853.7 586.7L849.5 588.8L848.5 595.6M875.6 573.8L879.1 581.4L885.7 588.6L891.3 589.6L891.6 579.9L900.3 578.9L911.1 581.8L924.7 581.6L933.0 582.8L938.4 579.9M891.3 589.6L887.1 607.7L887.1 615.0M885.7 588.6L878.6 592.9L881.9 602.5L882.2 615.7M861.0 592.9L873.7 592.4L878.6 592.9M873.7 592.4L876.0 596.3L877.0 605.8L877.7 612.9L880.0 616.2M861.0 592.9L861.7 600.1L862.6 606.3L859.1 613.9L861.5 618.6L859.8 621.0M848.5 595.6L852.8 599.1L861.7 600.1M848.5 595.6L845.2 594.6L836.8 597.0L838.4 605.3L834.4 609.1L835.3 615.3L839.6 617.4L838.9 624.4M834.4 609.1L830.2 610.1L829.7 605.6L825.9 604.9L824.5 608.4L820.3 612.3M825.9 604.9L824.3 601.0L821.7 597.7L815.6 598.4L811.8 602.2M836.8 597.0L833.5 592.9L834.9 591.0L830.4 586.0L824.1 588.6L820.8 586.2L816.3 586.7L809.9 584.9L809.9 589.6L805.2 590.5L803.8 593.2M809.9 584.9L802.9 584.8L795.8 586.5M795.4 580.4L803.4 580.4L801.9 579.4L807.1 580.9L809.5 581.4L809.2 581.8L803.4 582.3L800.1 582.6L795.6 583.0M817.0 574.8L817.7 579.9L820.8 583.5L820.8 586.2M940.7 582.8L943.1 590.5L937.0 597.2L932.0 605.3L927.6 613.4L923.8 612.0L920.5 612.9L916.0 617.4L914.9 622.4M940.7 582.8L945.4 589.1L945.0 597.7L940.0 599.4L947.3 609.6L961.9 607.2L963.8 602.5L970.4 602.0L976.5 594.8L982.1 592.9L985.7 598.2L985.4 603.7L988.3 603.9L993.0 607.9L998.6 613.6L1003.3 621.2M947.3 609.6L942.6 616.2L943.6 623.3L950.2 634.6L950.6 637.0L942.6 634.9L937.0 634.8L927.8 634.6L920.5 633.9M927.8 634.6L927.8 640.3L920.5 640.3M937.0 634.8L936.5 639.1L942.4 638.9L939.8 645.0L942.6 647.8M950.6 637.0L952.0 629.9L961.9 628.5L959.6 634.6L958.1 643.6L957.7 647.8M961.9 628.5L961.9 624.5L966.1 621.0L971.3 624.3L979.8 625.5L982.1 622.4L989.2 621.0L993.4 621.3L1003.3 621.2L1008.0 624.7L1013.2 623.1L1019.5 628.5L1019.1 633.7L1021.7 634.9L1017.7 639.4L1015.3 641.2L1013.9 645.5L1013.7 649.2M1019.5 628.5L1025.0 628.0L1032.0 627.3L1034.4 625.2L1036.5 627.6L1039.1 636.1L1036.7 639.8L1033.9 644.5L1034.1 649.7M1034.4 625.2L1043.5 623.3L1044.0 624.0L1048.0 624.0L1053.7 628.0L1060.2 628.8L1066.4 625.0L1071.5 626.3L1067.3 631.8L1067.3 648.8M1071.5 626.3L1079.1 622.4M985.7 598.2L991.1 598.7L996.3 595.8L1005.7 599.6L1009.9 600.6L1013.7 597.2L1019.3 598.9L1026.8 589.6L1030.6 587.2L1030.1 594.4L1034.4 600.1L1034.8 604.4L1029.7 607.7L1037.7 613.4L1043.5 623.3M1034.4 600.1L1038.8 593.4L1039.5 589.1L1044.3 584.7L1046.4 577.2L1045.9 572.9L1048.5 563.6L1056.0 558.9M1046.4 577.2L1052.7 574.1L1057.9 575.5L1063.5 576.3L1070.6 583.3L1073.9 585.7L1070.8 590.5L1071.1 592.9L1077.7 592.9" fill="none" stroke="#744e4c" stroke-width="1.25" stroke-linejoin="round" stroke-linecap="round"/><path d="M833.6 509.4L812.4 509.4" fill="none" stroke="#744e4c" stroke-width="2" stroke-dasharray="5 3"/><rect x="42" y="644" width="1033" height="1.5" fill="#98abdf"/><circle cx="420.3" cy="264.5" r="37.2" fill="#4dd9fd" fill-opacity=".97"/><circle cx="409.3" cy="442.3" r="24.3" fill="#45c2fd" fill-opacity=".97"/><circle cx="392.9" cy="529.1" r="57.1" fill="#55fefb" fill-opacity=".97"/><circle cx="862" cy="342" r="23.8" fill="#45c2fd" fill-opacity=".96"/><circle cx="896.5" cy="368" r="37.2" fill="#49d6fd" fill-opacity=".96"/><circle cx="931.9" cy="417.3" r="37" fill="#49d8fd" fill-opacity=".96"/><circle cx="923.6" cy="364.7" r="50.3" fill="#49efff" fill-opacity=".94"/><circle cx="886.2" cy="396.3" r="5.2" fill="#2f9af5"/><circle cx="1015" cy="515.5" r="18" fill="#46b6fc" fill-opacity=".98"/><g font-family="Liberation Sans, sans-serif" font-size="14" fill="#444" text-anchor="middle" stroke="#fff" stroke-width="2.6" stroke-linejoin="round" paint-order="stroke" ><text x="404.5" y="344.5" textLength="107" lengthAdjust="spacingAndGlyphs">NORTH AMERICA</text><text x="990" y="362.5" textLength="50" lengthAdjust="spacingAndGlyphs">EUROPE</text><text x="995" y="615.5" textLength="45" lengthAdjust="spacingAndGlyphs">AFRICA</text></g><g font-family="Liberation Sans, sans-serif" font-size="12.5" font-style="italic" fill="#3b6ea8"><text x="55.5" y="486.5" textLength="90" lengthAdjust="spacing">Pacific Ocean</text><text x="637" y="494.5" textLength="96" lengthAdjust="spacing">Atlantic Ocean</text></g><g font-family="Liberation Sans, sans-serif" font-size="10.8" fill="#222" stroke="#fff" stroke-width="2" stroke-opacity=".7" paint-order="stroke"><text x="872" y="638.5" textLength="140.5" lengthAdjust="spacingAndGlyphs">©2025 OSM ©2025 TomTom</text><text x="1018" y="638.5" textLength="45" lengthAdjust="spacingAndGlyphs">Feedback</text></g><rect x="1018" y="640.3" width="45" height="1" fill="#222"/><rect x="54" y="627" width="8.7" height="8.2" fill="#f25022"/><rect x="63.2" y="627" width="8.7" height="8.2" fill="#7fba00"/><rect x="54" y="635.8" width="8.7" height="8.2" fill="#00a4ef"/><rect x="63.2" y="635.8" width="8.7" height="8.2" fill="#ffb900"/><text x="76.3" y="640.6" font-family="Liberation Sans, sans-serif" font-size="13.8" fill="#737373" textLength="98.5" lengthAdjust="spacingAndGlyphs">Microsoft Azure</text></svg><div style="position:absolute;left:379.5px;top:292.5px;width:249px;height:59px;background:#fff;border:1px solid #c9c9c9;border-radius:5px;box-shadow:0 1px 4px rgba(0,0,0,.25)"></div><div style="position:absolute;white-space:nowrap;font-size:13.8px;line-height:16px;color:#444;right:509.5px;top:304px;letter-spacing:.2px">Country :</div><div style="position:absolute;white-space:nowrap;font-size:13.8px;line-height:16px;color:#444;left:531px;top:304px;font-weight:bold;color:#333;font-size:13.6px;letter-spacing:.15px">United States</div><div style="position:absolute;white-space:nowrap;font-size:13.8px;line-height:16px;color:#444;right:509.5px;top:326px;letter-spacing:.2px">Sum of Order Count :</div><div style="position:absolute;white-space:nowrap;font-size:13.8px;line-height:16px;color:#444;left:531px;top:326px;font-weight:bold;color:#333;font-size:13.6px;letter-spacing:.15px">34</div><svg style="position:absolute;left:365px;top:278px" width="24" height="32" viewBox="0 0 24 32"><path d="M2.3 2.3 L2.3 25 L7.6 20 L11.6 29 L15 27.5 L11 18.8 L18.6 18.8 Z" fill="#fff" stroke="#222" stroke-width="1.4" stroke-linejoin="round"/></svg></div>

 <div class="card" id="c2">
  <div class="abs ct" style="left:19px;top:18.5px;letter-spacing:.1px">Continent and Country</div>
 </div>
 <div id="tbl">
  <div id="th">
   <div class="hc" style="left:12px">Continent</div>
   <svg class="abs" style="left:83px;top:29.3px" width="18" height="14" viewBox="0 0 18 14"><path d="M2.2 11.5 L9 3.3 L15.8 11.5" fill="none" stroke="#444" stroke-width="2.8"/></svg>
   <div class="hc" style="left:340px">Country</div>
  </div>
  <div class="row" style="top:77px"><span class="a">North America</span><span class="b">Antigua and Barbuda</span></div>
  <div class="row" style="top:143px"><span class="a">North America</span><span class="b">Bahamas</span></div>
  <div class="row" style="top:209px"><span class="a">North America</span><span class="b">Barbados</span></div>
  <div class="row" style="top:275px"><span class="a">North America</span><span class="b">Belize</span></div>
  <div class="row" style="top:341px"><span class="a">North America</span><span class="b">Canada</span></div>
  <div class="row" style="top:407px"><span class="a">North America</span><span class="b">Costa Rica</span></div>
 </div>
</div>
</body>
</html>
